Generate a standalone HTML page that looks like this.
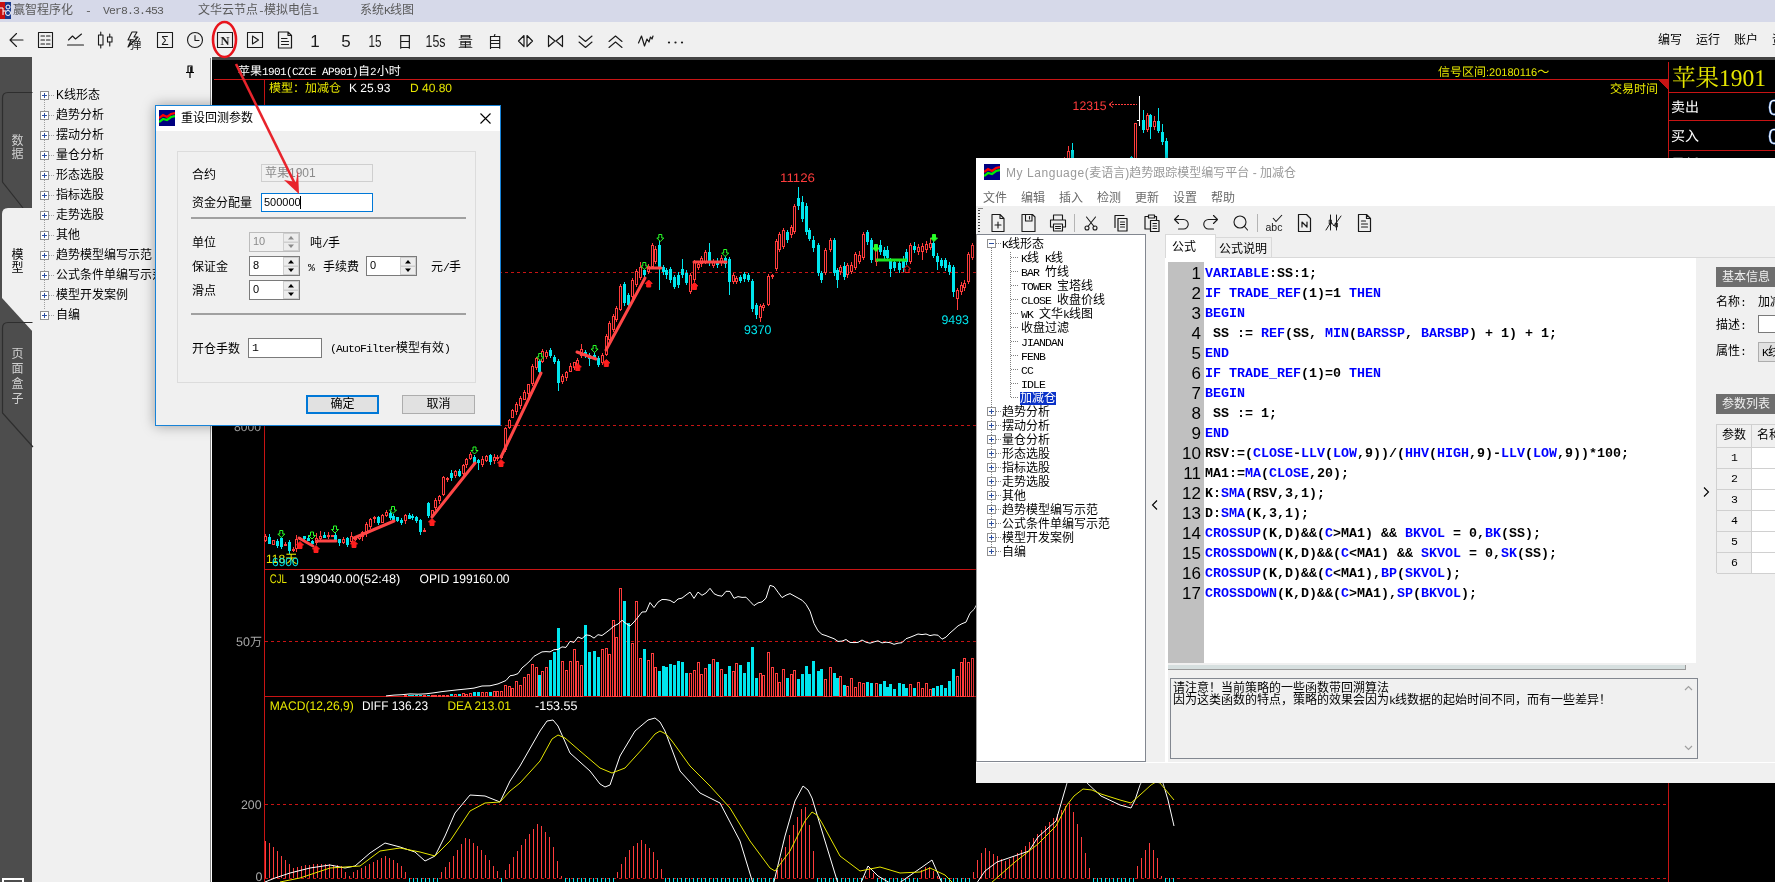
<!DOCTYPE html><html lang="zh"><head><meta charset="utf-8"><title>赢智程序化</title><style>
*{box-sizing:border-box;margin:0;padding:0}
html,body{width:1775px;height:882px;overflow:hidden;background:#f0f0f0}
body{position:relative;font-family:"Liberation Sans","Noto Sans CJK SC",sans-serif;font-size:12px;color:#000;line-height:1}
#root{position:absolute;left:0;top:0;width:1775px;height:882px;will-change:transform}
.abs{position:absolute}
.l{font-family:"Liberation Mono","Noto Sans CJK SC",monospace;font-size:11.5px;letter-spacing:-0.9px}
.ss{font-family:"Liberation Sans","Noto Sans CJK SC",sans-serif;font-size:12px;white-space:nowrap}
/* title bar */
#title{left:0;top:0;width:1775px;height:22px;background:#d6d9e9;color:#5a5a5a}
#title .t{position:absolute;top:4px;font-size:12px;white-space:pre}
#tb{left:0;top:22px;width:1775px;height:35px;background:#f0f0f0}
#tb svg{position:absolute;left:0;top:0}
#tb .r{position:absolute;top:12px;font-size:12px;white-space:nowrap}
#darkline{left:0;top:57px;width:1775px;height:3px;background:#444}
/* left */
#side{left:0;top:57px;width:32px;height:825px;background:#4d4d4d}
#treep{left:32px;top:57px;width:179px;height:825px;background:#f0f0f0}
.ti{position:absolute;left:56px;font-size:12px;white-space:nowrap}
/* chart */
#chart{left:0;top:0}
/* dialog */
#dlg{left:155px;top:105px;width:346px;height:321px;background:#f0f0f0;border:1px solid #1883d7;box-shadow:0 0 12px rgba(0,0,0,.35)}
#dlg .tt{position:absolute;left:0;top:0;width:344px;height:25px;background:#fff}
#dlg .lb{position:absolute;font-size:12px;white-space:nowrap}
#dlg .inp{position:absolute;background:#fff;border:1px solid #7a7a7a;font-size:11px;white-space:nowrap}
/* ML window */
#ml{left:976px;top:158px;width:800px;height:625px;background:#f0f0f0;box-shadow:0 0 10px rgba(0,0,0,.4)}
#ml .mt{position:absolute;left:0;top:0;width:800px;height:48px;background:#fff}
.mtr{position:absolute;white-space:nowrap;font-size:12px;line-height:14px}
.code{position:absolute;left:229px;white-space:pre;font-family:"Liberation Mono",monospace;font-weight:bold;font-size:13.33px;line-height:20px;color:#000}
.code b{color:#0000ff;font-weight:bold}
.ln{position:absolute;left:192px;width:33px;text-align:right;font-family:"Liberation Sans",sans-serif;font-size:17px;line-height:20px;color:#000}
</style></head><body><div id="root"><div class="abs" id="title"><svg class="abs" style="left:0;top:2px" width="11" height="17" viewBox="0 0 11 17"><rect width="11" height="17" fill="#c81010"/><rect x="5" y="0" width="6" height="17" fill="#1a3a8c"/><path d="M0 6h3v7M3 9h3" stroke="#fff" fill="none"/><circle cx="8" cy="5" r="2" fill="none" stroke="#fff"/><circle cx="8" cy="11" r="2.5" fill="none" stroke="#fff"/></svg><div class="t" style="left:13px">赢智程序化<span class="l">  -  Ver8.3.453</span></div><div class="t" style="left:198px">文华云节点<span class="l">-</span>模拟电信<span class="l">1</span></div><div class="t" style="left:360px">系统<span class="l">K</span>线图</div></div><div class="abs" id="tb"><svg width="720" height="35" viewBox="0 0 720 35"><g transform="translate(16.5,18)" stroke="#1a1a1a" stroke-width="1.1" fill="none" stroke-linecap="round" stroke-linejoin="round"><path d="M6.5 0H-6M0 -6.5L-6.5 0L0 6.5"/></g><g transform="translate(45.5,18)" stroke="#1a1a1a" stroke-width="1.1" fill="none" stroke-linecap="round" stroke-linejoin="round"><rect x="-7" y="-7.5" width="14" height="15"/><path d="M-4.5 -4H-1M1 -4H4.5M-4.5 0H-1M1 0H4.5M-4.5 4H-1M1 4H4.5"/></g><g transform="translate(75.5,18)" stroke="#1a1a1a" stroke-width="1.1" fill="none" stroke-linecap="round" stroke-linejoin="round"><path d="M-7 0L-3 -4L0 -1L6 -6M-8 5H8"/></g><g transform="translate(105.5,18)" stroke="#1a1a1a" stroke-width="1.1" fill="none" stroke-linecap="round" stroke-linejoin="round"><rect x="-7" y="-5" width="4.5" height="10"/><path d="M-4.75 -8V-5M-4.75 5V8"/><rect x="2" y="-3" width="4.5" height="5"/><path d="M4.25 -6V-3M4.25 2V6"/></g><g transform="translate(135,18)" stroke="#1a1a1a" stroke-width="1.1" fill="none" stroke-linecap="round" stroke-linejoin="round"><path d="M-3 -8H2L-1 -3H3L-7 7L-4 0H-7Z" stroke-width="1.1"/></g><g transform="translate(165,18)" stroke="#1a1a1a" stroke-width="1.1" fill="none" stroke-linecap="round" stroke-linejoin="round"><rect x="-7.5" y="-7.5" width="15" height="15"/></g><g transform="translate(195,18)" stroke="#1a1a1a" stroke-width="1.1" fill="none" stroke-linecap="round" stroke-linejoin="round"><circle r="7.5"/><path d="M0 -4.5V0.5H4"/></g><g transform="translate(225,18)" stroke="#1a1a1a" stroke-width="1.1" fill="none" stroke-linecap="round" stroke-linejoin="round"><rect x="-7.5" y="-7.5" width="15" height="15"/></g><g transform="translate(255,18)" stroke="#1a1a1a" stroke-width="1.1" fill="none" stroke-linecap="round" stroke-linejoin="round"><rect x="-7.5" y="-7.5" width="15" height="15"/><path d="M-2.5 -4L3.5 0L-2.5 4Z"/></g><g transform="translate(285,18)" stroke="#1a1a1a" stroke-width="1.1" fill="none" stroke-linecap="round" stroke-linejoin="round"><path d="M-6.5 -8H3L6.5 -4.5V8H-6.5ZM3 -8V-4.5H6.5M-3.5 -1.5H2M-3.5 1.5H3.5M-3.5 4.5H3.5" stroke-width="1.2"/></g><g transform="translate(525.5,19)" stroke="#1a1a1a" stroke-width="1.1" fill="none" stroke-linecap="round" stroke-linejoin="round"><path d="M-1.5 -5.5L-7 0L-1.5 5.5ZM1.5 -5.5L7 0L1.5 5.5Z" stroke-width="1.2"/></g><g transform="translate(555.5,19)" stroke="#1a1a1a" stroke-width="1.1" fill="none" stroke-linecap="round" stroke-linejoin="round"><path d="M-7 -5.5L-0.5 0L-7 5.5ZM7 -5.5L0.5 0L7 5.5Z" stroke-width="1.2"/></g><g transform="translate(585.5,19)" stroke="#1a1a1a" stroke-width="1.1" fill="none" stroke-linecap="round" stroke-linejoin="round"><path d="M-6.5 -5L0 0.5L6.5 -5M-6.5 1L0 6.5L6.5 1"/></g><g transform="translate(615.5,19)" stroke="#1a1a1a" stroke-width="1.1" fill="none" stroke-linecap="round" stroke-linejoin="round"><path d="M-6.5 0.5L0 -5L6.5 0.5M-6.5 6.5L0 1L6.5 6.5"/></g><g transform="translate(645.5,19)" stroke="#1a1a1a" stroke-width="1.1" fill="none" stroke-linecap="round" stroke-linejoin="round"><path d="M-7 2L-4 -5L-1 5L1.5 -2L3.5 1L5 -4L6.5 -2L7.5 -5" stroke-width="1.2"/></g><text x="135.5" y="27" font-size="12" font-family="Liberation Sans, Noto Sans CJK SC, sans-serif" fill="#1a1a1a" text-anchor="middle" >弹</text><text x="165" y="22.5" font-size="12" font-family="Liberation Sans, Noto Sans CJK SC, sans-serif" fill="#1a1a1a" text-anchor="middle" >Σ</text><text x="225" y="22.5" font-size="12.5" font-weight="bold" font-family="Liberation Serif, serif" fill="#1a1a1a" text-anchor="middle">N</text><text x="315" y="24.5" font-size="17" font-family="Liberation Sans, Noto Sans CJK SC, sans-serif" fill="#1a1a1a" text-anchor="middle" >1</text><text x="346" y="24.5" font-size="17" font-family="Liberation Sans, Noto Sans CJK SC, sans-serif" fill="#1a1a1a" text-anchor="middle" >5</text><text x="375" y="24.5" font-size="17" font-family="Liberation Sans, Noto Sans CJK SC, sans-serif" fill="#1a1a1a" text-anchor="middle" textLength="13" lengthAdjust="spacingAndGlyphs">15</text><text x="405" y="24.5" font-size="15" font-family="Liberation Sans, Noto Sans CJK SC, sans-serif" fill="#1a1a1a" text-anchor="middle" >日</text><text x="435.5" y="24.5" font-size="17" font-family="Liberation Sans, Noto Sans CJK SC, sans-serif" fill="#1a1a1a" text-anchor="middle" textLength="20" lengthAdjust="spacingAndGlyphs">15s</text><text x="465.5" y="24.5" font-size="15" font-family="Liberation Sans, Noto Sans CJK SC, sans-serif" fill="#1a1a1a" text-anchor="middle" >量</text><text x="495" y="24.5" font-size="15" font-family="Liberation Sans, Noto Sans CJK SC, sans-serif" fill="#1a1a1a" text-anchor="middle" >自</text><circle cx="669" cy="20.5" r="1.1" fill="#1a1a1a"/><circle cx="675.5" cy="20.5" r="1.1" fill="#1a1a1a"/><circle cx="682" cy="20.5" r="1.1" fill="#1a1a1a"/></svg><div class="r" style="left:1658px">编写</div><div class="r" style="left:1696px">运行</div><div class="r" style="left:1734px">账户</div><div class="r" style="left:1772px">资金</div></div><div class="abs" id="darkline"></div><div class="abs" id="side"></div><div class="abs" id="treep"></div><svg class="abs" style="left:0;top:57px" width="34" height="825" viewBox="0 57 34 825"><path d="M32.5 92.5H8Q2.5 92.5 2.5 98V182L23 208" fill="none" stroke="#2e2e2e" stroke-width="1.2"/><path d="M33 208H8Q2 208 2 214V298L33 332Z" fill="#f0f0f0"/><path d="M32.5 322.5H8Q2.5 322.5 2.5 328V413L33 447" fill="none" stroke="#2e2e2e" stroke-width="1.2"/><rect x="3" y="879" width="20" height="10" fill="none" stroke="#fff" stroke-width="2"/><text x="17.5" y="145" fill="#d0d0d0" font-family="Liberation Sans, Noto Sans CJK SC, sans-serif" text-anchor="middle" font-size="12">数</text><text x="17.5" y="158" fill="#d0d0d0" font-family="Liberation Sans, Noto Sans CJK SC, sans-serif" text-anchor="middle" font-size="12">据</text><text x="17.5" y="259" fill="#000" font-family="Liberation Sans, Noto Sans CJK SC, sans-serif" text-anchor="middle" font-size="12">模</text><text x="17.5" y="272" fill="#000" font-family="Liberation Sans, Noto Sans CJK SC, sans-serif" text-anchor="middle" font-size="12">型</text><text x="17.5" y="358" fill="#d0d0d0" font-family="Liberation Sans, Noto Sans CJK SC, sans-serif" text-anchor="middle" font-size="12">页</text><text x="17.5" y="373" fill="#d0d0d0" font-family="Liberation Sans, Noto Sans CJK SC, sans-serif" text-anchor="middle" font-size="12">面</text><text x="17.5" y="388" fill="#d0d0d0" font-family="Liberation Sans, Noto Sans CJK SC, sans-serif" text-anchor="middle" font-size="12">盒</text><text x="17.5" y="403" fill="#d0d0d0" font-family="Liberation Sans, Noto Sans CJK SC, sans-serif" text-anchor="middle" font-size="12">子</text></svg><svg class="abs" style="left:32px;top:57px" width="178" height="300" viewBox="32 57 178 300" shape-rendering="crispEdges"><path d="M44.5 100V310" stroke="#a0a0a0" stroke-dasharray="1 1"/><path d="M49 95.5H54" stroke="#a0a0a0" stroke-dasharray="1 1"/><rect x="40.5" y="91.5" width="8" height="8" fill="#fff" stroke="#919191"/><path d="M42 95.5H47M44.5 93V98" stroke="#2c4ea0"/><path d="M49 115.5H54" stroke="#a0a0a0" stroke-dasharray="1 1"/><rect x="40.5" y="111.5" width="8" height="8" fill="#fff" stroke="#919191"/><path d="M42 115.5H47M44.5 113V118" stroke="#2c4ea0"/><path d="M49 135.5H54" stroke="#a0a0a0" stroke-dasharray="1 1"/><rect x="40.5" y="131.5" width="8" height="8" fill="#fff" stroke="#919191"/><path d="M42 135.5H47M44.5 133V138" stroke="#2c4ea0"/><path d="M49 155.5H54" stroke="#a0a0a0" stroke-dasharray="1 1"/><rect x="40.5" y="151.5" width="8" height="8" fill="#fff" stroke="#919191"/><path d="M42 155.5H47M44.5 153V158" stroke="#2c4ea0"/><path d="M49 175.5H54" stroke="#a0a0a0" stroke-dasharray="1 1"/><rect x="40.5" y="171.5" width="8" height="8" fill="#fff" stroke="#919191"/><path d="M42 175.5H47M44.5 173V178" stroke="#2c4ea0"/><path d="M49 195.5H54" stroke="#a0a0a0" stroke-dasharray="1 1"/><rect x="40.5" y="191.5" width="8" height="8" fill="#fff" stroke="#919191"/><path d="M42 195.5H47M44.5 193V198" stroke="#2c4ea0"/><path d="M49 215.5H54" stroke="#a0a0a0" stroke-dasharray="1 1"/><rect x="40.5" y="211.5" width="8" height="8" fill="#fff" stroke="#919191"/><path d="M42 215.5H47M44.5 213V218" stroke="#2c4ea0"/><path d="M49 235.5H54" stroke="#a0a0a0" stroke-dasharray="1 1"/><rect x="40.5" y="231.5" width="8" height="8" fill="#fff" stroke="#919191"/><path d="M42 235.5H47M44.5 233V238" stroke="#2c4ea0"/><path d="M49 255.5H54" stroke="#a0a0a0" stroke-dasharray="1 1"/><rect x="40.5" y="251.5" width="8" height="8" fill="#fff" stroke="#919191"/><path d="M42 255.5H47M44.5 253V258" stroke="#2c4ea0"/><path d="M49 275.5H54" stroke="#a0a0a0" stroke-dasharray="1 1"/><rect x="40.5" y="271.5" width="8" height="8" fill="#fff" stroke="#919191"/><path d="M42 275.5H47M44.5 273V278" stroke="#2c4ea0"/><path d="M49 295.5H54" stroke="#a0a0a0" stroke-dasharray="1 1"/><rect x="40.5" y="291.5" width="8" height="8" fill="#fff" stroke="#919191"/><path d="M42 295.5H47M44.5 293V298" stroke="#2c4ea0"/><path d="M49 315.5H54" stroke="#a0a0a0" stroke-dasharray="1 1"/><rect x="40.5" y="311.5" width="8" height="8" fill="#fff" stroke="#919191"/><path d="M42 315.5H47M44.5 313V318" stroke="#2c4ea0"/><g shape-rendering="geometricPrecision"><path d="M187.5 66H192.5M188 66.5V72.5H192V66.5M186 72.5H194M190 72.5V78" stroke="#000" stroke-width="1.2" fill="none"/><path d="M191 67V72" stroke="#000" stroke-width="1.6"/></g></svg><div class="ti abs" style="top:89px">K线形态</div><div class="ti abs" style="top:109px">趋势分析</div><div class="ti abs" style="top:129px">摆动分析</div><div class="ti abs" style="top:149px">量仓分析</div><div class="ti abs" style="top:169px">形态选股</div><div class="ti abs" style="top:189px">指标选股</div><div class="ti abs" style="top:209px">走势选股</div><div class="ti abs" style="top:229px">其他</div><div class="ti abs" style="top:249px">趋势模型编写示范</div><div class="ti abs" style="top:269px">公式条件单编写示范</div><div class="ti abs" style="top:289px">模型开发案例</div><div class="ti abs" style="top:309px">自编</div><svg class="abs" id="chart" width="1775" height="882" viewBox="0 0 1775 882" shape-rendering="crispEdges" text-rendering="geometricPrecision"><rect x="212" y="60" width="1563" height="822" fill="#000"/><rect x="210" y="58" width="1" height="824" fill="#8c8c8c"/><rect x="211" y="57" width="1" height="825" fill="#fff"/><path d="M214 79.5H1668M264.5 79V882M264 569.5H1668M264 696.5H1668M1668.5 62V882M1668 92.5H1775M1668 120.5H1775M1668 150.5H1775" stroke="#c81414" fill="none"/><path d="M1658 80H1668V90Z" fill="#c81414"/><path d="M265 272.5H1668M265 425.5H1668M265 641.5H1668M265 804.5H1668M265 878.5H1668" stroke="#c81414" stroke-dasharray="3 3" fill="none"/><g shape-rendering="crispEdges"><path d="M265.5 534V536M265.5 541V542" stroke="#ff3c3c"/><rect x="264.5" y="536.5" width="2" height="4" fill="#000" stroke="#ff3c3c"/><path d="M269.5 534V544" stroke="#00e6ee"/><rect x="268" y="537" width="3" height="7" fill="#00e6ee"/><path d="M273.5 540V540M273.5 545V545" stroke="#ff3c3c"/><rect x="272.5" y="540.5" width="2" height="4" fill="#000" stroke="#ff3c3c"/><path d="M277.5 539V548" stroke="#00e6ee"/><rect x="276" y="541" width="3" height="5" fill="#00e6ee"/><path d="M281.5 536V549" stroke="#00e6ee"/><rect x="280" y="538" width="3" height="9" fill="#00e6ee"/><path d="M285.5 542V544M285.5 546V546" stroke="#ff3c3c"/><rect x="284.5" y="544.5" width="2" height="1" fill="#000" stroke="#ff3c3c"/><path d="M289.5 540V554" stroke="#00e6ee"/><rect x="288" y="542" width="3" height="9" fill="#00e6ee"/><path d="M293.5 547V549M293.5 550V552" stroke="#ff3c3c"/><rect x="292.5" y="549.5" width="2" height="1" fill="#000" stroke="#ff3c3c"/><path d="M296.5 535V539M296.5 549V552" stroke="#ff3c3c"/><rect x="295.5" y="539.5" width="2" height="9" fill="#000" stroke="#ff3c3c"/><path d="M300.5 537V538M300.5 540V540" stroke="#ff3c3c"/><rect x="299.5" y="538.5" width="2" height="1" fill="#000" stroke="#ff3c3c"/><path d="M304.5 536V542" stroke="#00e6ee"/><rect x="303" y="536" width="3" height="3" fill="#00e6ee"/><path d="M308.5 535V541" stroke="#00e6ee"/><rect x="307" y="538" width="3" height="3" fill="#00e6ee"/><path d="M312.5 540V544" stroke="#00e6ee"/><rect x="311" y="541" width="3" height="3" fill="#00e6ee"/><path d="M316.5 533V538M316.5 543V545" stroke="#ff3c3c"/><rect x="315.5" y="538.5" width="2" height="4" fill="#000" stroke="#ff3c3c"/><path d="M320.5 531V536M320.5 539V541" stroke="#ff3c3c"/><rect x="319.5" y="536.5" width="2" height="2" fill="#000" stroke="#ff3c3c"/><path d="M324.5 532V538" stroke="#00e6ee"/><rect x="323" y="535" width="3" height="3" fill="#00e6ee"/><path d="M328.5 532V535M328.5 537V539" stroke="#ff3c3c"/><rect x="327.5" y="535.5" width="2" height="1" fill="#000" stroke="#ff3c3c"/><path d="M332.5 535V535M332.5 536V537" stroke="#ff3c3c"/><rect x="331.5" y="535.5" width="2" height="1" fill="#000" stroke="#ff3c3c"/><path d="M335.5 532V541" stroke="#00e6ee"/><rect x="334" y="535" width="3" height="5" fill="#00e6ee"/><path d="M339.5 539V546" stroke="#00e6ee"/><rect x="338" y="539" width="3" height="4" fill="#00e6ee"/><path d="M343.5 537V539M343.5 543V544" stroke="#ff3c3c"/><rect x="342.5" y="539.5" width="2" height="3" fill="#000" stroke="#ff3c3c"/><path d="M347.5 537V547" stroke="#00e6ee"/><rect x="346" y="538" width="3" height="7" fill="#00e6ee"/><path d="M351.5 532V536M351.5 542V544" stroke="#ff3c3c"/><rect x="350.5" y="536.5" width="2" height="5" fill="#000" stroke="#ff3c3c"/><path d="M355.5 537V537M355.5 540V541" stroke="#ff3c3c"/><rect x="354.5" y="537.5" width="2" height="2" fill="#000" stroke="#ff3c3c"/><path d="M359.5 535V535M359.5 539V540" stroke="#ff3c3c"/><rect x="358.5" y="535.5" width="2" height="3" fill="#000" stroke="#ff3c3c"/><path d="M362.5 531V532M362.5 537V541" stroke="#ff3c3c"/><rect x="361.5" y="532.5" width="2" height="4" fill="#000" stroke="#ff3c3c"/><path d="M366.5 522V524M366.5 534V537" stroke="#ff3c3c"/><rect x="365.5" y="524.5" width="2" height="9" fill="#000" stroke="#ff3c3c"/><path d="M370.5 518V519M370.5 527V529" stroke="#ff3c3c"/><rect x="369.5" y="519.5" width="2" height="7" fill="#000" stroke="#ff3c3c"/><path d="M374.5 516V517M374.5 519V523" stroke="#ff3c3c"/><rect x="373.5" y="517.5" width="2" height="1" fill="#000" stroke="#ff3c3c"/><path d="M378.5 516V525" stroke="#00e6ee"/><rect x="377" y="517" width="3" height="6" fill="#00e6ee"/><path d="M382.5 514V515M382.5 523V523" stroke="#ff3c3c"/><rect x="381.5" y="515.5" width="2" height="7" fill="#000" stroke="#ff3c3c"/><path d="M386.5 510V512M386.5 516V517" stroke="#ff3c3c"/><rect x="385.5" y="512.5" width="2" height="3" fill="#000" stroke="#ff3c3c"/><path d="M390.5 511V520" stroke="#00e6ee"/><rect x="389" y="513" width="3" height="5" fill="#00e6ee"/><path d="M393.5 514V522" stroke="#00e6ee"/><rect x="392" y="516" width="3" height="4" fill="#00e6ee"/><path d="M397.5 517V522" stroke="#00e6ee"/><rect x="396" y="517" width="3" height="4" fill="#00e6ee"/><path d="M401.5 518V525" stroke="#00e6ee"/><rect x="400" y="520" width="3" height="3" fill="#00e6ee"/><path d="M405.5 514V515M405.5 521V524" stroke="#ff3c3c"/><rect x="404.5" y="515.5" width="2" height="5" fill="#000" stroke="#ff3c3c"/><path d="M409.5 513V519" stroke="#00e6ee"/><rect x="408" y="515" width="3" height="4" fill="#00e6ee"/><path d="M412.5 514V520" stroke="#00e6ee"/><rect x="411" y="516" width="3" height="2" fill="#00e6ee"/><path d="M416.5 516V523" stroke="#00e6ee"/><rect x="415" y="517" width="3" height="4" fill="#00e6ee"/><path d="M420.5 519V535" stroke="#00e6ee"/><rect x="419" y="520" width="3" height="12" fill="#00e6ee"/><path d="M424.5 528V530M424.5 532V532" stroke="#ff3c3c"/><rect x="423.5" y="530.5" width="2" height="1" fill="#000" stroke="#ff3c3c"/><path d="M428.5 502V518" stroke="#00e6ee"/><rect x="427" y="503" width="3" height="13" fill="#00e6ee"/><path d="M432.5 510V510M432.5 516V516" stroke="#ff3c3c"/><rect x="431.5" y="510.5" width="2" height="5" fill="#000" stroke="#ff3c3c"/><path d="M435.5 498V500M435.5 508V510" stroke="#ff3c3c"/><rect x="434.5" y="500.5" width="2" height="7" fill="#000" stroke="#ff3c3c"/><path d="M439.5 495V496M439.5 501V504" stroke="#ff3c3c"/><rect x="438.5" y="496.5" width="2" height="4" fill="#000" stroke="#ff3c3c"/><path d="M443.5 476V477M443.5 495V496" stroke="#ff3c3c"/><rect x="442.5" y="477.5" width="2" height="17" fill="#000" stroke="#ff3c3c"/><path d="M447.5 477V478M447.5 480V482" stroke="#ff3c3c"/><rect x="446.5" y="478.5" width="2" height="1" fill="#000" stroke="#ff3c3c"/><path d="M451.5 470V481" stroke="#00e6ee"/><rect x="450" y="473" width="3" height="5" fill="#00e6ee"/><path d="M455.5 470V471M455.5 476V478" stroke="#ff3c3c"/><rect x="454.5" y="471.5" width="2" height="4" fill="#000" stroke="#ff3c3c"/><path d="M459.5 469V477" stroke="#00e6ee"/><rect x="458" y="471" width="3" height="5" fill="#00e6ee"/><path d="M463.5 464V465M463.5 474V476" stroke="#ff3c3c"/><rect x="462.5" y="465.5" width="2" height="8" fill="#000" stroke="#ff3c3c"/><path d="M466.5 458V459M466.5 465V468" stroke="#ff3c3c"/><rect x="465.5" y="459.5" width="2" height="5" fill="#000" stroke="#ff3c3c"/><path d="M470.5 452V454M470.5 459V460" stroke="#ff3c3c"/><rect x="469.5" y="454.5" width="2" height="4" fill="#000" stroke="#ff3c3c"/><path d="M474.5 455V464" stroke="#00e6ee"/><rect x="473" y="457" width="3" height="6" fill="#00e6ee"/><path d="M478.5 459V470" stroke="#00e6ee"/><rect x="477" y="460" width="3" height="3" fill="#00e6ee"/><path d="M482.5 456V459M482.5 465V467" stroke="#ff3c3c"/><rect x="481.5" y="459.5" width="2" height="5" fill="#000" stroke="#ff3c3c"/><path d="M486.5 455V456M486.5 461V462" stroke="#ff3c3c"/><rect x="485.5" y="456.5" width="2" height="4" fill="#000" stroke="#ff3c3c"/><path d="M490.5 454V465" stroke="#00e6ee"/><rect x="489" y="455" width="3" height="7" fill="#00e6ee"/><path d="M494.5 454V457M494.5 461V464" stroke="#ff3c3c"/><rect x="493.5" y="457.5" width="2" height="3" fill="#000" stroke="#ff3c3c"/><path d="M497.5 455V457M497.5 459V461" stroke="#ff3c3c"/><rect x="496.5" y="457.5" width="2" height="1" fill="#000" stroke="#ff3c3c"/><path d="M501.5 454V455M501.5 458V459" stroke="#ff3c3c"/><rect x="500.5" y="455.5" width="2" height="2" fill="#000" stroke="#ff3c3c"/><path d="M505.5 427V428M505.5 450V452" stroke="#ff3c3c"/><rect x="504.5" y="428.5" width="2" height="21" fill="#000" stroke="#ff3c3c"/><path d="M509.5 419V420M509.5 428V429" stroke="#ff3c3c"/><rect x="508.5" y="420.5" width="2" height="7" fill="#000" stroke="#ff3c3c"/><path d="M512.5 409V410M512.5 418V418" stroke="#ff3c3c"/><rect x="511.5" y="410.5" width="2" height="7" fill="#000" stroke="#ff3c3c"/><path d="M516.5 402V404M516.5 412V415" stroke="#ff3c3c"/><rect x="515.5" y="404.5" width="2" height="7" fill="#000" stroke="#ff3c3c"/><path d="M520.5 396V398M520.5 406V409" stroke="#ff3c3c"/><rect x="519.5" y="398.5" width="2" height="7" fill="#000" stroke="#ff3c3c"/><path d="M524.5 390V392M524.5 400V400" stroke="#ff3c3c"/><rect x="523.5" y="392.5" width="2" height="7" fill="#000" stroke="#ff3c3c"/><path d="M528.5 384V384M528.5 394V397" stroke="#ff3c3c"/><rect x="527.5" y="384.5" width="2" height="9" fill="#000" stroke="#ff3c3c"/><path d="M532.5 364V366M532.5 384V386" stroke="#ff3c3c"/><rect x="531.5" y="366.5" width="2" height="17" fill="#000" stroke="#ff3c3c"/><path d="M536.5 357V358M536.5 368V370" stroke="#ff3c3c"/><rect x="535.5" y="358.5" width="2" height="9" fill="#000" stroke="#ff3c3c"/><path d="M539.5 359V374" stroke="#00e6ee"/><rect x="538" y="361" width="3" height="11" fill="#00e6ee"/><path d="M542.5 349V351M542.5 362V363" stroke="#ff3c3c"/><rect x="541.5" y="351.5" width="2" height="10" fill="#000" stroke="#ff3c3c"/><path d="M546.5 350V352M546.5 357V359" stroke="#ff3c3c"/><rect x="545.5" y="352.5" width="2" height="4" fill="#000" stroke="#ff3c3c"/><path d="M550.5 348V358" stroke="#00e6ee"/><rect x="549" y="350" width="3" height="6" fill="#00e6ee"/><path d="M554.5 355V364" stroke="#00e6ee"/><rect x="553" y="357" width="3" height="5" fill="#00e6ee"/><path d="M558.5 359V391" stroke="#00e6ee"/><rect x="557" y="361" width="3" height="22" fill="#00e6ee"/><path d="M562.5 374V376M562.5 382V384" stroke="#ff3c3c"/><rect x="561.5" y="376.5" width="2" height="5" fill="#000" stroke="#ff3c3c"/><path d="M566.5 371V372M566.5 378V381" stroke="#ff3c3c"/><rect x="565.5" y="372.5" width="2" height="5" fill="#000" stroke="#ff3c3c"/><path d="M570.5 363V366M570.5 372V372" stroke="#ff3c3c"/><rect x="569.5" y="366.5" width="2" height="5" fill="#000" stroke="#ff3c3c"/><path d="M574.5 362V362M574.5 368V370" stroke="#ff3c3c"/><rect x="573.5" y="362.5" width="2" height="5" fill="#000" stroke="#ff3c3c"/><path d="M577.5 358V360M577.5 366V368" stroke="#ff3c3c"/><rect x="576.5" y="360.5" width="2" height="5" fill="#000" stroke="#ff3c3c"/><path d="M581.5 344V349M581.5 356V358" stroke="#ff3c3c"/><rect x="580.5" y="349.5" width="2" height="6" fill="#000" stroke="#ff3c3c"/><path d="M585.5 350V358" stroke="#00e6ee"/><rect x="584" y="352" width="3" height="4" fill="#00e6ee"/><path d="M589.5 353V366" stroke="#00e6ee"/><rect x="588" y="355" width="3" height="4" fill="#00e6ee"/><path d="M594.5 351V360" stroke="#00e6ee"/><rect x="593" y="355" width="3" height="3" fill="#00e6ee"/><path d="M598.5 356V367" stroke="#00e6ee"/><rect x="597" y="358" width="3" height="7" fill="#00e6ee"/><path d="M602.5 353V355M602.5 363V365" stroke="#ff3c3c"/><rect x="601.5" y="355.5" width="2" height="7" fill="#000" stroke="#ff3c3c"/><path d="M606.5 334V336M606.5 355V356" stroke="#ff3c3c"/><rect x="605.5" y="336.5" width="2" height="18" fill="#000" stroke="#ff3c3c"/><path d="M609.5 321V323M609.5 340V342" stroke="#ff3c3c"/><rect x="608.5" y="323.5" width="2" height="16" fill="#000" stroke="#ff3c3c"/><path d="M613.5 314V316M613.5 330V332" stroke="#ff3c3c"/><rect x="612.5" y="316.5" width="2" height="13" fill="#000" stroke="#ff3c3c"/><path d="M616.5 306V308M616.5 320V322" stroke="#ff3c3c"/><rect x="615.5" y="308.5" width="2" height="11" fill="#000" stroke="#ff3c3c"/><path d="M620.5 284V286M620.5 310V311" stroke="#ff3c3c"/><rect x="619.5" y="286.5" width="2" height="23" fill="#000" stroke="#ff3c3c"/><path d="M624.5 282V306" stroke="#00e6ee"/><rect x="623" y="284" width="3" height="19" fill="#00e6ee"/><path d="M628.5 293V308" stroke="#00e6ee"/><rect x="627" y="295" width="3" height="10" fill="#00e6ee"/><path d="M632.5 278V280M632.5 297V299" stroke="#ff3c3c"/><rect x="631.5" y="280.5" width="2" height="16" fill="#000" stroke="#ff3c3c"/><path d="M636.5 269V271M636.5 285V287" stroke="#ff3c3c"/><rect x="635.5" y="271.5" width="2" height="13" fill="#000" stroke="#ff3c3c"/><path d="M640.5 262V267M640.5 278V280" stroke="#ff3c3c"/><rect x="639.5" y="267.5" width="2" height="10" fill="#000" stroke="#ff3c3c"/><path d="M644.5 264V277" stroke="#00e6ee"/><rect x="643" y="270" width="3" height="5" fill="#00e6ee"/><path d="M648.5 264V266M648.5 272V274" stroke="#ff3c3c"/><rect x="647.5" y="266.5" width="2" height="5" fill="#000" stroke="#ff3c3c"/><path d="M652.5 243V245M652.5 267V268" stroke="#ff3c3c"/><rect x="651.5" y="245.5" width="2" height="21" fill="#000" stroke="#ff3c3c"/><path d="M655.5 246V249M655.5 262V264" stroke="#ff3c3c"/><rect x="654.5" y="249.5" width="2" height="12" fill="#000" stroke="#ff3c3c"/><path d="M659.5 241V290" stroke="#00e6ee"/><rect x="658" y="245" width="3" height="22" fill="#00e6ee"/><path d="M663.5 265V275" stroke="#00e6ee"/><rect x="662" y="267" width="3" height="5" fill="#00e6ee"/><path d="M666.5 268V279" stroke="#00e6ee"/><rect x="665" y="270" width="3" height="5" fill="#00e6ee"/><path d="M670.5 267V283" stroke="#00e6ee"/><rect x="669" y="269" width="3" height="11" fill="#00e6ee"/><path d="M674.5 275V289" stroke="#00e6ee"/><rect x="673" y="277" width="3" height="10" fill="#00e6ee"/><path d="M678.5 272V288" stroke="#00e6ee"/><rect x="677" y="275" width="3" height="10" fill="#00e6ee"/><path d="M682.5 259V278" stroke="#00e6ee"/><rect x="681" y="269" width="3" height="6" fill="#00e6ee"/><path d="M686.5 270V285" stroke="#00e6ee"/><rect x="685" y="273" width="3" height="10" fill="#00e6ee"/><path d="M690.5 273V275M690.5 292V294" stroke="#ff3c3c"/><rect x="689.5" y="275.5" width="2" height="16" fill="#000" stroke="#ff3c3c"/><path d="M694.5 260V262M694.5 280V282" stroke="#ff3c3c"/><rect x="693.5" y="262.5" width="2" height="17" fill="#000" stroke="#ff3c3c"/><path d="M698.5 261V264M698.5 268V270" stroke="#ff3c3c"/><rect x="697.5" y="264.5" width="2" height="3" fill="#000" stroke="#ff3c3c"/><path d="M701.5 256V258M701.5 264V267" stroke="#ff3c3c"/><rect x="700.5" y="258.5" width="2" height="5" fill="#000" stroke="#ff3c3c"/><path d="M705.5 250V252M705.5 262V264" stroke="#ff3c3c"/><rect x="704.5" y="252.5" width="2" height="9" fill="#000" stroke="#ff3c3c"/><path d="M709.5 243V266" stroke="#00e6ee"/><rect x="708" y="252" width="3" height="10" fill="#00e6ee"/><path d="M713.5 259V262M713.5 266V268" stroke="#ff3c3c"/><rect x="712.5" y="262.5" width="2" height="3" fill="#000" stroke="#ff3c3c"/><path d="M717.5 258V268" stroke="#00e6ee"/><rect x="716" y="261" width="3" height="4" fill="#00e6ee"/><path d="M721.5 255V258M721.5 263V266" stroke="#ff3c3c"/><rect x="720.5" y="258.5" width="2" height="4" fill="#000" stroke="#ff3c3c"/><path d="M725.5 255V268" stroke="#00e6ee"/><rect x="724" y="258" width="3" height="6" fill="#00e6ee"/><path d="M729.5 257V295" stroke="#00e6ee"/><rect x="728" y="259" width="3" height="23" fill="#00e6ee"/><path d="M733.5 273V275M733.5 282V284" stroke="#ff3c3c"/><rect x="732.5" y="275.5" width="2" height="6" fill="#000" stroke="#ff3c3c"/><path d="M736.5 276V278M736.5 282V284" stroke="#ff3c3c"/><rect x="735.5" y="278.5" width="2" height="3" fill="#000" stroke="#ff3c3c"/><path d="M740.5 275V283" stroke="#00e6ee"/><rect x="739" y="277" width="3" height="4" fill="#00e6ee"/><path d="M744.5 272V282" stroke="#00e6ee"/><rect x="743" y="274" width="3" height="5" fill="#00e6ee"/><path d="M748.5 273V282" stroke="#00e6ee"/><rect x="747" y="275" width="3" height="5" fill="#00e6ee"/><path d="M752.5 279V312" stroke="#00e6ee"/><rect x="751" y="281" width="3" height="28" fill="#00e6ee"/><path d="M756.5 303V319" stroke="#00e6ee"/><rect x="755" y="305" width="3" height="10" fill="#00e6ee"/><path d="M760.5 304V306M760.5 318V322" stroke="#ff3c3c"/><rect x="759.5" y="306.5" width="2" height="11" fill="#000" stroke="#ff3c3c"/><path d="M763.5 303V305M763.5 308V311" stroke="#ff3c3c"/><rect x="762.5" y="305.5" width="2" height="2" fill="#000" stroke="#ff3c3c"/><path d="M768.5 274V276M768.5 305V306" stroke="#ff3c3c"/><rect x="767.5" y="276.5" width="2" height="28" fill="#000" stroke="#ff3c3c"/><path d="M772.5 274V275M772.5 277V279" stroke="#ff3c3c"/><rect x="771.5" y="275.5" width="2" height="1" fill="#000" stroke="#ff3c3c"/><path d="M776.5 239V241M776.5 269V271" stroke="#ff3c3c"/><rect x="775.5" y="241.5" width="2" height="27" fill="#000" stroke="#ff3c3c"/><path d="M779.5 232V234M779.5 250V252" stroke="#ff3c3c"/><rect x="778.5" y="234.5" width="2" height="15" fill="#000" stroke="#ff3c3c"/><path d="M783.5 228V230M783.5 247V249" stroke="#ff3c3c"/><rect x="782.5" y="230.5" width="2" height="16" fill="#000" stroke="#ff3c3c"/><path d="M787.5 230V243" stroke="#00e6ee"/><rect x="786" y="232" width="3" height="8" fill="#00e6ee"/><path d="M791.5 225V227M791.5 235V238" stroke="#ff3c3c"/><rect x="790.5" y="227.5" width="2" height="7" fill="#000" stroke="#ff3c3c"/><path d="M794.5 204V206M794.5 232V234" stroke="#ff3c3c"/><rect x="793.5" y="206.5" width="2" height="25" fill="#000" stroke="#ff3c3c"/><path d="M798.5 187V210" stroke="#00e6ee"/><rect x="797" y="198" width="3" height="8" fill="#00e6ee"/><path d="M802.5 196V222" stroke="#00e6ee"/><rect x="801" y="202" width="3" height="17" fill="#00e6ee"/><path d="M806.5 203V235" stroke="#00e6ee"/><rect x="805" y="206" width="3" height="26" fill="#00e6ee"/><path d="M809.5 228V241" stroke="#00e6ee"/><rect x="808" y="230" width="3" height="9" fill="#00e6ee"/><path d="M813.5 236V252" stroke="#00e6ee"/><rect x="812" y="240" width="3" height="8" fill="#00e6ee"/><path d="M818.5 243V276" stroke="#00e6ee"/><rect x="817" y="245" width="3" height="28" fill="#00e6ee"/><path d="M821.5 271V283" stroke="#00e6ee"/><rect x="820" y="273" width="3" height="7" fill="#00e6ee"/><path d="M825.5 248V250M825.5 273V275" stroke="#ff3c3c"/><rect x="824.5" y="250.5" width="2" height="22" fill="#000" stroke="#ff3c3c"/><path d="M830.5 238V240M830.5 250V252" stroke="#ff3c3c"/><rect x="829.5" y="240.5" width="2" height="9" fill="#000" stroke="#ff3c3c"/><path d="M834.5 238V276" stroke="#00e6ee"/><rect x="833" y="240" width="3" height="33" fill="#00e6ee"/><path d="M837.5 268V288" stroke="#00e6ee"/><rect x="836" y="270" width="3" height="10" fill="#00e6ee"/><path d="M840.5 265V267M840.5 272V275" stroke="#ff3c3c"/><rect x="839.5" y="267.5" width="2" height="4" fill="#000" stroke="#ff3c3c"/><path d="M844.5 262V280" stroke="#00e6ee"/><rect x="843" y="266" width="3" height="11" fill="#00e6ee"/><path d="M847.5 263V265M847.5 275V278" stroke="#ff3c3c"/><rect x="846.5" y="265.5" width="2" height="9" fill="#000" stroke="#ff3c3c"/><path d="M851.5 262V265M851.5 272V274" stroke="#ff3c3c"/><rect x="850.5" y="265.5" width="2" height="6" fill="#000" stroke="#ff3c3c"/><path d="M855.5 252V254M855.5 268V270" stroke="#ff3c3c"/><rect x="854.5" y="254.5" width="2" height="13" fill="#000" stroke="#ff3c3c"/><path d="M859.5 251V255M859.5 262V264" stroke="#ff3c3c"/><rect x="858.5" y="255.5" width="2" height="6" fill="#000" stroke="#ff3c3c"/><path d="M863.5 232V234M863.5 258V260" stroke="#ff3c3c"/><rect x="862.5" y="234.5" width="2" height="23" fill="#000" stroke="#ff3c3c"/><path d="M867.5 230V245" stroke="#00e6ee"/><rect x="866" y="232" width="3" height="10" fill="#00e6ee"/><path d="M871.5 238V263" stroke="#00e6ee"/><rect x="870" y="240" width="3" height="20" fill="#00e6ee"/><path d="M876.5 245V247M876.5 262V266" stroke="#ff3c3c"/><rect x="875.5" y="247.5" width="2" height="14" fill="#000" stroke="#ff3c3c"/><path d="M880.5 240V255" stroke="#00e6ee"/><rect x="879" y="245" width="3" height="7" fill="#00e6ee"/><path d="M884.5 247V259" stroke="#00e6ee"/><rect x="883" y="250" width="3" height="6" fill="#00e6ee"/><path d="M887.5 246V261" stroke="#00e6ee"/><rect x="886" y="250" width="3" height="8" fill="#00e6ee"/><path d="M890.5 258V277" stroke="#00e6ee"/><rect x="889" y="260" width="3" height="9" fill="#00e6ee"/><path d="M894.5 259V271" stroke="#00e6ee"/><rect x="893" y="262" width="3" height="6" fill="#00e6ee"/><path d="M899.5 260V273" stroke="#00e6ee"/><rect x="898" y="263" width="3" height="7" fill="#00e6ee"/><path d="M903.5 256V272" stroke="#00e6ee"/><rect x="902" y="259" width="3" height="9" fill="#00e6ee"/><path d="M906.5 249V265" stroke="#00e6ee"/><rect x="905" y="252" width="3" height="10" fill="#00e6ee"/><path d="M910.5 243V245M910.5 262V264" stroke="#ff3c3c"/><rect x="909.5" y="245.5" width="2" height="16" fill="#000" stroke="#ff3c3c"/><path d="M914.5 242V253" stroke="#00e6ee"/><rect x="913" y="246" width="3" height="4" fill="#00e6ee"/><path d="M918.5 244V247M918.5 252V255" stroke="#ff3c3c"/><rect x="917.5" y="247.5" width="2" height="4" fill="#000" stroke="#ff3c3c"/><path d="M922.5 243V246M922.5 252V260" stroke="#ff3c3c"/><rect x="921.5" y="246.5" width="2" height="5" fill="#000" stroke="#ff3c3c"/><path d="M926.5 241V244M926.5 250V253" stroke="#ff3c3c"/><rect x="925.5" y="244.5" width="2" height="5" fill="#000" stroke="#ff3c3c"/><path d="M930.5 238V243M930.5 248V250" stroke="#ff3c3c"/><rect x="929.5" y="243.5" width="2" height="4" fill="#000" stroke="#ff3c3c"/><path d="M933.5 241V258" stroke="#00e6ee"/><rect x="932" y="243" width="3" height="13" fill="#00e6ee"/><path d="M937.5 253V270" stroke="#00e6ee"/><rect x="936" y="256" width="3" height="6" fill="#00e6ee"/><path d="M941.5 258V268" stroke="#00e6ee"/><rect x="940" y="260" width="3" height="6" fill="#00e6ee"/><path d="M945.5 258V271" stroke="#00e6ee"/><rect x="944" y="260" width="3" height="8" fill="#00e6ee"/><path d="M949.5 262V275" stroke="#00e6ee"/><rect x="948" y="265" width="3" height="7" fill="#00e6ee"/><path d="M953.5 265V297" stroke="#00e6ee"/><rect x="952" y="267" width="3" height="25" fill="#00e6ee"/><path d="M957.5 288V290M957.5 299V310" stroke="#ff3c3c"/><rect x="956.5" y="290.5" width="2" height="8" fill="#000" stroke="#ff3c3c"/><path d="M961.5 282V285M961.5 292V295" stroke="#ff3c3c"/><rect x="960.5" y="285.5" width="2" height="6" fill="#000" stroke="#ff3c3c"/><path d="M964.5 280V283M964.5 288V291" stroke="#ff3c3c"/><rect x="963.5" y="283.5" width="2" height="4" fill="#000" stroke="#ff3c3c"/><path d="M968.5 252V254M968.5 282V284" stroke="#ff3c3c"/><rect x="967.5" y="254.5" width="2" height="27" fill="#000" stroke="#ff3c3c"/><path d="M972.5 243V245M972.5 258V260" stroke="#ff3c3c"/><rect x="971.5" y="245.5" width="2" height="12" fill="#000" stroke="#ff3c3c"/><path d="M977.5 238V240M977.5 250V252" stroke="#ff3c3c"/><rect x="976.5" y="240.5" width="2" height="9" fill="#000" stroke="#ff3c3c"/><path d="M981.5 233V247" stroke="#00e6ee"/><rect x="980" y="236" width="3" height="8" fill="#00e6ee"/><path d="M985.5 225V225M985.5 240V240" stroke="#ff3c3c"/><rect x="984.5" y="225.5" width="2" height="14" fill="#000" stroke="#ff3c3c"/><path d="M989.5 213V215M989.5 228V231" stroke="#ff3c3c"/><rect x="988.5" y="215.5" width="2" height="12" fill="#000" stroke="#ff3c3c"/><path d="M993.5 205V205M993.5 218V218" stroke="#ff3c3c"/><rect x="992.5" y="205.5" width="2" height="12" fill="#000" stroke="#ff3c3c"/><path d="M997.5 198V215" stroke="#00e6ee"/><rect x="996" y="200" width="3" height="12" fill="#00e6ee"/><path d="M1001.5 194V196M1001.5 206V209" stroke="#ff3c3c"/><rect x="1000.5" y="196.5" width="2" height="9" fill="#000" stroke="#ff3c3c"/><path d="M1005.5 188V190M1005.5 200V200" stroke="#ff3c3c"/><rect x="1004.5" y="190.5" width="2" height="9" fill="#000" stroke="#ff3c3c"/><path d="M1009.5 183V198" stroke="#00e6ee"/><rect x="1008" y="186" width="3" height="10" fill="#00e6ee"/><path d="M1013.5 181V182M1013.5 192V192" stroke="#ff3c3c"/><rect x="1012.5" y="182.5" width="2" height="9" fill="#000" stroke="#ff3c3c"/><path d="M1017.5 175V178M1017.5 188V188" stroke="#ff3c3c"/><rect x="1016.5" y="178.5" width="2" height="9" fill="#000" stroke="#ff3c3c"/><path d="M1021.5 175V188" stroke="#00e6ee"/><rect x="1020" y="176" width="3" height="10" fill="#00e6ee"/><path d="M1025.5 171V172M1025.5 182V183" stroke="#ff3c3c"/><rect x="1024.5" y="172.5" width="2" height="9" fill="#000" stroke="#ff3c3c"/><path d="M1029.5 167V170M1029.5 180V183" stroke="#ff3c3c"/><rect x="1028.5" y="170.5" width="2" height="9" fill="#000" stroke="#ff3c3c"/><path d="M1033.5 165V176" stroke="#00e6ee"/><rect x="1032" y="168" width="3" height="8" fill="#00e6ee"/><path d="M1037.5 165V166M1037.5 174V177" stroke="#ff3c3c"/><rect x="1036.5" y="166.5" width="2" height="7" fill="#000" stroke="#ff3c3c"/><path d="M1041.5 162V165M1041.5 172V174" stroke="#ff3c3c"/><rect x="1040.5" y="165.5" width="2" height="6" fill="#000" stroke="#ff3c3c"/><path d="M1045.5 163V175" stroke="#00e6ee"/><rect x="1044" y="164" width="3" height="8" fill="#00e6ee"/><path d="M1049.5 161V163M1049.5 170V173" stroke="#ff3c3c"/><rect x="1048.5" y="163.5" width="2" height="6" fill="#000" stroke="#ff3c3c"/><path d="M1053.5 161V163M1053.5 170V173" stroke="#ff3c3c"/><rect x="1052.5" y="163.5" width="2" height="6" fill="#000" stroke="#ff3c3c"/><path d="M1057.5 161V171" stroke="#00e6ee"/><rect x="1056" y="162" width="3" height="8" fill="#00e6ee"/><path d="M1061.5 160V161M1061.5 168V170" stroke="#ff3c3c"/><rect x="1060.5" y="161.5" width="2" height="6" fill="#000" stroke="#ff3c3c"/><path d="M1064.5 157V158M1064.5 166V168" stroke="#ff3c3c"/><rect x="1063.5" y="158.5" width="2" height="7" fill="#000" stroke="#ff3c3c"/><path d="M1068.5 146V151M1068.5 164V166" stroke="#ff3c3c"/><rect x="1067.5" y="151.5" width="2" height="12" fill="#000" stroke="#ff3c3c"/><path d="M1072.5 143V168" stroke="#00e6ee"/><rect x="1071" y="150" width="3" height="15" fill="#00e6ee"/><path d="M1076.5 159V160M1076.5 168V170" stroke="#ff3c3c"/><rect x="1075.5" y="160.5" width="2" height="7" fill="#000" stroke="#ff3c3c"/><path d="M1080.5 161V172" stroke="#00e6ee"/><rect x="1079" y="162" width="3" height="8" fill="#00e6ee"/><path d="M1084.5 162V163M1084.5 170V172" stroke="#ff3c3c"/><rect x="1083.5" y="163.5" width="2" height="6" fill="#000" stroke="#ff3c3c"/><path d="M1088.5 163V174" stroke="#00e6ee"/><rect x="1087" y="164" width="3" height="8" fill="#00e6ee"/><path d="M1092.5 163V164M1092.5 172V174" stroke="#ff3c3c"/><rect x="1091.5" y="164.5" width="2" height="7" fill="#000" stroke="#ff3c3c"/><path d="M1096.5 164V176" stroke="#00e6ee"/><rect x="1095" y="165" width="3" height="9" fill="#00e6ee"/><path d="M1100.5 164V165M1100.5 174V176" stroke="#ff3c3c"/><rect x="1099.5" y="165.5" width="2" height="8" fill="#000" stroke="#ff3c3c"/><path d="M1104.5 165V178" stroke="#00e6ee"/><rect x="1103" y="166" width="3" height="10" fill="#00e6ee"/><path d="M1108.5 165V166M1108.5 176V178" stroke="#ff3c3c"/><rect x="1107.5" y="166.5" width="2" height="9" fill="#000" stroke="#ff3c3c"/><path d="M1112.5 166V180" stroke="#00e6ee"/><rect x="1111" y="167" width="3" height="11" fill="#00e6ee"/><path d="M1116.5 166V167M1116.5 178V180" stroke="#ff3c3c"/><rect x="1115.5" y="167.5" width="2" height="10" fill="#000" stroke="#ff3c3c"/><path d="M1120.5 167V182" stroke="#00e6ee"/><rect x="1119" y="168" width="3" height="12" fill="#00e6ee"/><path d="M1124.5 167V168M1124.5 180V182" stroke="#ff3c3c"/><rect x="1123.5" y="168.5" width="2" height="11" fill="#000" stroke="#ff3c3c"/><path d="M1128.5 165V166M1128.5 180V182" stroke="#ff3c3c"/><rect x="1127.5" y="166.5" width="2" height="13" fill="#000" stroke="#ff3c3c"/><path d="M1131.5 156V172" stroke="#00e6ee"/><rect x="1130" y="157" width="3" height="13" fill="#00e6ee"/><path d="M1135.5 123V123M1135.5 175V176" stroke="#ff3c3c"/><rect x="1134.5" y="123.5" width="2" height="51" fill="#000" stroke="#ff3c3c"/><path d="M1143.5 110V133" stroke="#00e6ee"/><rect x="1142" y="120" width="3" height="10" fill="#00e6ee"/><path d="M1147.5 113V115M1147.5 130V132" stroke="#ff3c3c"/><rect x="1146.5" y="115.5" width="2" height="14" fill="#000" stroke="#ff3c3c"/><path d="M1150.5 114V139" stroke="#00e6ee"/><rect x="1149" y="115" width="3" height="12" fill="#00e6ee"/><path d="M1154.5 116V121M1154.5 127V130" stroke="#ff3c3c"/><rect x="1153.5" y="121.5" width="2" height="5" fill="#000" stroke="#ff3c3c"/><path d="M1158.5 108V133" stroke="#00e6ee"/><rect x="1157" y="121" width="3" height="10" fill="#00e6ee"/><path d="M1162.5 124V145" stroke="#00e6ee"/><rect x="1161" y="132" width="3" height="10" fill="#00e6ee"/><path d="M1166.5 138V170" stroke="#00e6ee"/><rect x="1165" y="141" width="3" height="24" fill="#00e6ee"/></g><g shape-rendering="crispEdges"><rect x="404.5" y="695.5" width="2" height="1" fill="#000" stroke="#ff3c3c"/><rect x="408" y="695" width="3" height="1" fill="#00e6ee"/><rect x="411" y="695" width="3" height="1" fill="#00e6ee"/><rect x="415" y="695" width="3" height="1" fill="#00e6ee"/><rect x="419" y="695" width="3" height="1" fill="#00e6ee"/><rect x="423.5" y="695.5" width="2" height="1" fill="#000" stroke="#ff3c3c"/><rect x="427" y="695" width="3" height="1" fill="#00e6ee"/><rect x="431.5" y="695.5" width="2" height="1" fill="#000" stroke="#ff3c3c"/><rect x="434.5" y="695.5" width="2" height="1" fill="#000" stroke="#ff3c3c"/><rect x="438.5" y="695.5" width="2" height="1" fill="#000" stroke="#ff3c3c"/><rect x="442.5" y="695.5" width="2" height="1" fill="#000" stroke="#ff3c3c"/><rect x="446.5" y="695.5" width="2" height="1" fill="#000" stroke="#ff3c3c"/><rect x="450" y="694" width="3" height="2" fill="#00e6ee"/><rect x="454.5" y="694.5" width="2" height="2" fill="#000" stroke="#ff3c3c"/><rect x="458" y="694" width="3" height="2" fill="#00e6ee"/><rect x="462.5" y="693.5" width="2" height="3" fill="#000" stroke="#ff3c3c"/><rect x="465.5" y="694.5" width="2" height="2" fill="#000" stroke="#ff3c3c"/><rect x="469.5" y="693.5" width="2" height="3" fill="#000" stroke="#ff3c3c"/><rect x="473" y="692" width="3" height="4" fill="#00e6ee"/><rect x="477" y="692" width="3" height="4" fill="#00e6ee"/><rect x="481.5" y="692.5" width="2" height="4" fill="#000" stroke="#ff3c3c"/><rect x="485.5" y="692.5" width="2" height="4" fill="#000" stroke="#ff3c3c"/><rect x="489" y="692" width="3" height="4" fill="#00e6ee"/><rect x="493.5" y="691.5" width="2" height="5" fill="#000" stroke="#ff3c3c"/><rect x="496.5" y="691.5" width="2" height="5" fill="#000" stroke="#ff3c3c"/><rect x="500.5" y="691.5" width="2" height="5" fill="#000" stroke="#ff3c3c"/><rect x="504.5" y="685.5" width="2" height="11" fill="#000" stroke="#ff3c3c"/><rect x="508.5" y="686.5" width="2" height="10" fill="#000" stroke="#ff3c3c"/><rect x="511.5" y="688.5" width="2" height="8" fill="#000" stroke="#ff3c3c"/><rect x="515.5" y="681.5" width="2" height="15" fill="#000" stroke="#ff3c3c"/><rect x="519.5" y="685.5" width="2" height="11" fill="#000" stroke="#ff3c3c"/><rect x="523.5" y="677.5" width="2" height="19" fill="#000" stroke="#ff3c3c"/><rect x="527.5" y="674.5" width="2" height="22" fill="#000" stroke="#ff3c3c"/><rect x="531.5" y="664.5" width="2" height="32" fill="#000" stroke="#ff3c3c"/><rect x="535.5" y="667.5" width="2" height="29" fill="#000" stroke="#ff3c3c"/><rect x="538" y="675" width="3" height="21" fill="#00e6ee"/><rect x="541.5" y="671.5" width="2" height="25" fill="#000" stroke="#ff3c3c"/><rect x="545.5" y="667.5" width="2" height="29" fill="#000" stroke="#ff3c3c"/><rect x="549" y="660" width="3" height="36" fill="#00e6ee"/><rect x="553" y="652" width="3" height="44" fill="#00e6ee"/><rect x="557" y="628" width="3" height="68" fill="#00e6ee"/><rect x="561.5" y="661.5" width="2" height="35" fill="#000" stroke="#ff3c3c"/><rect x="565.5" y="670.5" width="2" height="26" fill="#000" stroke="#ff3c3c"/><rect x="569.5" y="661.5" width="2" height="35" fill="#000" stroke="#ff3c3c"/><rect x="573.5" y="649.5" width="2" height="47" fill="#000" stroke="#ff3c3c"/><rect x="576.5" y="661.5" width="2" height="35" fill="#000" stroke="#ff3c3c"/><rect x="580.5" y="665.5" width="2" height="31" fill="#000" stroke="#ff3c3c"/><rect x="584" y="625" width="3" height="71" fill="#00e6ee"/><rect x="588" y="652" width="3" height="44" fill="#00e6ee"/><rect x="593" y="651" width="3" height="45" fill="#00e6ee"/><rect x="597" y="657" width="3" height="39" fill="#00e6ee"/><rect x="601.5" y="649.5" width="2" height="47" fill="#000" stroke="#ff3c3c"/><rect x="605.5" y="648.5" width="2" height="48" fill="#000" stroke="#ff3c3c"/><rect x="608.5" y="654.5" width="2" height="42" fill="#000" stroke="#ff3c3c"/><rect x="612.5" y="620.5" width="2" height="76" fill="#000" stroke="#ff3c3c"/><rect x="615.5" y="637.5" width="2" height="59" fill="#000" stroke="#ff3c3c"/><rect x="619.5" y="588.5" width="2" height="108" fill="#000" stroke="#ff3c3c"/><rect x="623" y="601" width="3" height="95" fill="#00e6ee"/><rect x="627" y="623" width="3" height="73" fill="#00e6ee"/><rect x="631.5" y="643.5" width="2" height="53" fill="#000" stroke="#ff3c3c"/><rect x="635.5" y="601.5" width="2" height="95" fill="#000" stroke="#ff3c3c"/><rect x="639.5" y="658.5" width="2" height="38" fill="#000" stroke="#ff3c3c"/><rect x="643" y="649" width="3" height="47" fill="#00e6ee"/><rect x="647.5" y="660.5" width="2" height="36" fill="#000" stroke="#ff3c3c"/><rect x="651.5" y="653.5" width="2" height="43" fill="#000" stroke="#ff3c3c"/><rect x="654.5" y="667.5" width="2" height="29" fill="#000" stroke="#ff3c3c"/><rect x="658" y="671" width="3" height="25" fill="#00e6ee"/><rect x="662" y="666" width="3" height="30" fill="#00e6ee"/><rect x="665" y="667" width="3" height="29" fill="#00e6ee"/><rect x="669" y="664" width="3" height="32" fill="#00e6ee"/><rect x="673" y="665" width="3" height="31" fill="#00e6ee"/><rect x="677" y="661" width="3" height="35" fill="#00e6ee"/><rect x="681" y="662" width="3" height="34" fill="#00e6ee"/><rect x="685" y="673" width="3" height="23" fill="#00e6ee"/><rect x="689.5" y="673.5" width="2" height="23" fill="#000" stroke="#ff3c3c"/><rect x="693.5" y="670.5" width="2" height="26" fill="#000" stroke="#ff3c3c"/><rect x="697.5" y="662.5" width="2" height="34" fill="#000" stroke="#ff3c3c"/><rect x="700.5" y="674.5" width="2" height="22" fill="#000" stroke="#ff3c3c"/><rect x="704.5" y="668.5" width="2" height="28" fill="#000" stroke="#ff3c3c"/><rect x="708" y="664" width="3" height="32" fill="#00e6ee"/><rect x="712.5" y="659.5" width="2" height="37" fill="#000" stroke="#ff3c3c"/><rect x="716" y="662" width="3" height="34" fill="#00e6ee"/><rect x="720.5" y="669.5" width="2" height="27" fill="#000" stroke="#ff3c3c"/><rect x="724" y="674" width="3" height="22" fill="#00e6ee"/><rect x="728" y="666" width="3" height="30" fill="#00e6ee"/><rect x="732.5" y="671.5" width="2" height="25" fill="#000" stroke="#ff3c3c"/><rect x="735.5" y="663.5" width="2" height="33" fill="#000" stroke="#ff3c3c"/><rect x="739" y="665" width="3" height="31" fill="#00e6ee"/><rect x="743" y="673" width="3" height="23" fill="#00e6ee"/><rect x="747" y="662" width="3" height="34" fill="#00e6ee"/><rect x="751" y="647" width="3" height="49" fill="#00e6ee"/><rect x="755" y="678" width="3" height="18" fill="#00e6ee"/><rect x="759.5" y="673.5" width="2" height="23" fill="#000" stroke="#ff3c3c"/><rect x="762.5" y="675.5" width="2" height="21" fill="#000" stroke="#ff3c3c"/><rect x="767.5" y="652.5" width="2" height="44" fill="#000" stroke="#ff3c3c"/><rect x="771.5" y="667.5" width="2" height="29" fill="#000" stroke="#ff3c3c"/><rect x="775.5" y="673.5" width="2" height="23" fill="#000" stroke="#ff3c3c"/><rect x="778.5" y="682.5" width="2" height="14" fill="#000" stroke="#ff3c3c"/><rect x="782.5" y="669.5" width="2" height="27" fill="#000" stroke="#ff3c3c"/><rect x="786" y="678" width="3" height="18" fill="#00e6ee"/><rect x="790.5" y="674.5" width="2" height="22" fill="#000" stroke="#ff3c3c"/><rect x="793.5" y="670.5" width="2" height="26" fill="#000" stroke="#ff3c3c"/><rect x="797" y="679" width="3" height="17" fill="#00e6ee"/><rect x="801" y="674" width="3" height="22" fill="#00e6ee"/><rect x="805" y="666" width="3" height="30" fill="#00e6ee"/><rect x="808" y="674" width="3" height="22" fill="#00e6ee"/><rect x="812" y="661" width="3" height="35" fill="#00e6ee"/><rect x="817" y="671" width="3" height="25" fill="#00e6ee"/><rect x="820" y="669" width="3" height="27" fill="#00e6ee"/><rect x="824.5" y="679.5" width="2" height="17" fill="#000" stroke="#ff3c3c"/><rect x="829.5" y="667.5" width="2" height="29" fill="#000" stroke="#ff3c3c"/><rect x="833" y="673" width="3" height="23" fill="#00e6ee"/><rect x="836" y="678" width="3" height="18" fill="#00e6ee"/><rect x="839.5" y="676.5" width="2" height="20" fill="#000" stroke="#ff3c3c"/><rect x="843" y="685" width="3" height="11" fill="#00e6ee"/><rect x="846.5" y="686.5" width="2" height="10" fill="#000" stroke="#ff3c3c"/><rect x="850.5" y="678.5" width="2" height="18" fill="#000" stroke="#ff3c3c"/><rect x="854.5" y="687.5" width="2" height="9" fill="#000" stroke="#ff3c3c"/><rect x="858.5" y="682.5" width="2" height="14" fill="#000" stroke="#ff3c3c"/><rect x="862.5" y="683.5" width="2" height="13" fill="#000" stroke="#ff3c3c"/><rect x="866" y="682" width="3" height="14" fill="#00e6ee"/><rect x="870" y="683" width="3" height="13" fill="#00e6ee"/><rect x="875.5" y="683.5" width="2" height="13" fill="#000" stroke="#ff3c3c"/><rect x="879" y="684" width="3" height="12" fill="#00e6ee"/><rect x="883" y="681" width="3" height="15" fill="#00e6ee"/><rect x="886" y="687" width="3" height="9" fill="#00e6ee"/><rect x="889" y="684" width="3" height="12" fill="#00e6ee"/><rect x="893" y="689" width="3" height="7" fill="#00e6ee"/><rect x="898" y="683" width="3" height="13" fill="#00e6ee"/><rect x="902" y="684" width="3" height="12" fill="#00e6ee"/><rect x="905" y="688" width="3" height="8" fill="#00e6ee"/><rect x="909.5" y="684.5" width="2" height="12" fill="#000" stroke="#ff3c3c"/><rect x="913" y="688" width="3" height="8" fill="#00e6ee"/><rect x="917.5" y="682.5" width="2" height="14" fill="#000" stroke="#ff3c3c"/><rect x="921.5" y="688.5" width="2" height="8" fill="#000" stroke="#ff3c3c"/><rect x="925.5" y="683.5" width="2" height="13" fill="#000" stroke="#ff3c3c"/><rect x="929.5" y="689.5" width="2" height="7" fill="#000" stroke="#ff3c3c"/><rect x="932" y="688" width="3" height="8" fill="#00e6ee"/><rect x="936" y="686" width="3" height="10" fill="#00e6ee"/><rect x="940" y="685" width="3" height="11" fill="#00e6ee"/><rect x="944" y="688" width="3" height="8" fill="#00e6ee"/><rect x="948" y="681" width="3" height="15" fill="#00e6ee"/><rect x="952" y="669" width="3" height="27" fill="#00e6ee"/><rect x="956.5" y="676.5" width="2" height="20" fill="#000" stroke="#ff3c3c"/><rect x="960.5" y="662.5" width="2" height="34" fill="#000" stroke="#ff3c3c"/><rect x="963.5" y="658.5" width="2" height="38" fill="#000" stroke="#ff3c3c"/><rect x="967.5" y="662.5" width="2" height="34" fill="#000" stroke="#ff3c3c"/><rect x="971.5" y="658.5" width="2" height="38" fill="#000" stroke="#ff3c3c"/><rect x="976.5" y="662.5" width="2" height="34" fill="#000" stroke="#ff3c3c"/><rect x="980" y="647" width="3" height="49" fill="#00e6ee"/><rect x="984.5" y="638.5" width="2" height="58" fill="#000" stroke="#ff3c3c"/><rect x="988.5" y="657.5" width="2" height="39" fill="#000" stroke="#ff3c3c"/><rect x="992.5" y="651.5" width="2" height="45" fill="#000" stroke="#ff3c3c"/><rect x="996" y="631" width="3" height="65" fill="#00e6ee"/><rect x="1000.5" y="608.5" width="2" height="88" fill="#000" stroke="#ff3c3c"/><rect x="1004.5" y="612.5" width="2" height="84" fill="#000" stroke="#ff3c3c"/><rect x="1008" y="620" width="3" height="76" fill="#00e6ee"/><rect x="1012.5" y="611.5" width="2" height="85" fill="#000" stroke="#ff3c3c"/><rect x="1016.5" y="641.5" width="2" height="55" fill="#000" stroke="#ff3c3c"/><rect x="1020" y="641" width="3" height="55" fill="#00e6ee"/><rect x="1024.5" y="618.5" width="2" height="78" fill="#000" stroke="#ff3c3c"/><rect x="1028.5" y="642.5" width="2" height="54" fill="#000" stroke="#ff3c3c"/><rect x="1032" y="645" width="3" height="51" fill="#00e6ee"/><rect x="1036.5" y="614.5" width="2" height="82" fill="#000" stroke="#ff3c3c"/><rect x="1040.5" y="621.5" width="2" height="75" fill="#000" stroke="#ff3c3c"/><rect x="1044" y="623" width="3" height="73" fill="#00e6ee"/><rect x="1048.5" y="609.5" width="2" height="87" fill="#000" stroke="#ff3c3c"/><rect x="1052.5" y="603.5" width="2" height="93" fill="#000" stroke="#ff3c3c"/><rect x="1056" y="644" width="3" height="52" fill="#00e6ee"/><rect x="1060.5" y="637.5" width="2" height="59" fill="#000" stroke="#ff3c3c"/><rect x="1063.5" y="645.5" width="2" height="51" fill="#000" stroke="#ff3c3c"/><rect x="1067.5" y="643.5" width="2" height="53" fill="#000" stroke="#ff3c3c"/><rect x="1071" y="627" width="3" height="69" fill="#00e6ee"/><rect x="1075.5" y="648.5" width="2" height="48" fill="#000" stroke="#ff3c3c"/><rect x="1079" y="608" width="3" height="88" fill="#00e6ee"/><rect x="1083.5" y="648.5" width="2" height="48" fill="#000" stroke="#ff3c3c"/><rect x="1087" y="636" width="3" height="60" fill="#00e6ee"/><rect x="1091.5" y="608.5" width="2" height="88" fill="#000" stroke="#ff3c3c"/><rect x="1095" y="626" width="3" height="70" fill="#00e6ee"/><rect x="1099.5" y="645.5" width="2" height="51" fill="#000" stroke="#ff3c3c"/><rect x="1103" y="642" width="3" height="54" fill="#00e6ee"/><rect x="1107.5" y="633.5" width="2" height="63" fill="#000" stroke="#ff3c3c"/><rect x="1111" y="622" width="3" height="74" fill="#00e6ee"/><rect x="1115.5" y="636.5" width="2" height="60" fill="#000" stroke="#ff3c3c"/><rect x="1119" y="647" width="3" height="49" fill="#00e6ee"/><rect x="1123.5" y="637.5" width="2" height="59" fill="#000" stroke="#ff3c3c"/><rect x="1127.5" y="625.5" width="2" height="71" fill="#000" stroke="#ff3c3c"/><rect x="1130" y="624" width="3" height="72" fill="#00e6ee"/><rect x="1134.5" y="625.5" width="2" height="71" fill="#000" stroke="#ff3c3c"/><rect x="1142" y="629" width="3" height="67" fill="#00e6ee"/><rect x="1146.5" y="654.5" width="2" height="42" fill="#000" stroke="#ff3c3c"/><rect x="1149" y="647" width="3" height="49" fill="#00e6ee"/><rect x="1153.5" y="649.5" width="2" height="47" fill="#000" stroke="#ff3c3c"/><rect x="1157" y="650" width="3" height="46" fill="#00e6ee"/><rect x="1161" y="654" width="3" height="42" fill="#00e6ee"/><rect x="1165" y="643" width="3" height="53" fill="#00e6ee"/><path d="M386 695.9L394 695.1L402 694.7L410 693.9L418 694.2L426 693.8L434 692.8L442 691.6L450 690.7L458 689.8L466 689.0L474 688.1L482 686.0L490 685.8L498 683.9L506 680.5L510 675.8L514 675.1L518 673.6L522 667.9L526 664.6L530 660.9L534 656.3L538 654.1L542 651.9L546 651.6L550 651.9L554 649.7L558 649.5L562 646.9L566 647.4L570 641.3L574 642.4L578 637.0L582 638.6L586 634.9L590 635.5L594 638.1L598 634.7L602 635.5L606 632.6L610 629.5L614 625.9L618 624.1L622 620.3L626 623.5L630 626.1L634 622.0L638 617.2L642 612.0L646 611.8L650 602.5L654 607.6L658 602.1L662 599.5L666 599.6L670 600.4L674 602.7L678 599.0L682 598.1L686 595.0L690 592.1L694 598.4L698 592.1L702 595.3L706 593.0L710 588.3L714 593.7L718 595.5L722 596.2L726 591.3L730 591.4L734 598.3L738 596.6L742 597.4L746 597.2L750 601.4L754 605.6L758 602.9L762 601.9L766 598.2L770 585.3L774 586.7L778 592.2L782 597.6L786 595.2L790 593.6L794 595.8L798 598.0L802 600.2L806 604.3L810 611.1L814 623.4L818 630.8L822 634.4L826 635.6L830 637.2L834 638.7L838 641.4L842 641.1L846 639.5L850 642.4L854 642.6L858 642.4L862 640.0L866 642.2L870 643.2L874 641.9L878 640.8L882 642.9L886 642.2L890 642.7L894 644.3L898 643.2L902 642.7L906 638.7L910 637.3L914 635.7L918 634.0L922 634.6L926 634.0L930 635.6L934 634.8L938 635.2L942 639.2L946 637.1L950 633.0L954 629.5L958 625.9L962 623.7L966 622.1L970 613.2L974 609.4L978 602.2L982 604.4L986 599.6L990 600.4L994 599.3L998 598.6L1002 600.0L1006 597.1L1010 601.2L1014 600.5L1018 596.8L1022 600.2L1026 599.5L1030 598.3L1034 598.9L1038 598.5L1042 597.2L1046 595.9L1050 597.4L1054 594.8L1058 597.9L1062 597.2L1066 596.0L1070 595.3L1074 596.5L1078 595.3L1082 597.1L1086 596.1L1090 594.9L1094 595.9L1098 591.7L1102 594.9L1106 595.2L1110 594.6L1114 595.6L1118 593.8L1122 590.8L1126 590.4L1130 593.1L1134 594.5L1138 591.4L1142 591.5L1146 589.3L1150 588.9L1154 591.3L1158 589.6L1162 589.5L1166 590.3L1170 588.1L1174 592.2" fill="none" stroke="#fff" stroke-width="1" shape-rendering="geometricPrecision"/></g><g shape-rendering="geometricPrecision"><path d="M265.5 841V878" stroke="#ff3c3c"/><path d="M269.5 843V878" stroke="#ff3c3c"/><path d="M273.5 847V878" stroke="#ff3c3c"/><path d="M277.5 851V878" stroke="#ff3c3c"/><path d="M281.5 856V878" stroke="#ff3c3c"/><path d="M285.5 860V878" stroke="#ff3c3c"/><path d="M289.5 864V878" stroke="#ff3c3c"/><path d="M293.5 868V878" stroke="#ff3c3c"/><path d="M297.5 867V878" stroke="#ff3c3c"/><path d="M301.5 866V878" stroke="#ff3c3c"/><path d="M305.5 865V878" stroke="#ff3c3c"/><path d="M309.5 865V878" stroke="#ff3c3c"/><path d="M313.5 864V878" stroke="#ff3c3c"/><path d="M317.5 864V878" stroke="#ff3c3c"/><path d="M321.5 864V878" stroke="#ff3c3c"/><path d="M325.5 864V878" stroke="#ff3c3c"/><path d="M329.5 864V878" stroke="#ff3c3c"/><path d="M333.5 865V878" stroke="#ff3c3c"/><path d="M337.5 865V878" stroke="#ff3c3c"/><path d="M341.5 866V878" stroke="#ff3c3c"/><path d="M345.5 872V878" stroke="#ff3c3c"/><path d="M349.5 876V878" stroke="#ff3c3c"/><path d="M353.5 872V878" stroke="#ff3c3c"/><path d="M357.5 870V878" stroke="#ff3c3c"/><path d="M361.5 868V878" stroke="#ff3c3c"/><path d="M365.5 866V878" stroke="#ff3c3c"/><path d="M369.5 864V878" stroke="#ff3c3c"/><path d="M373.5 862V878" stroke="#ff3c3c"/><path d="M377.5 860V878" stroke="#ff3c3c"/><path d="M381.5 858V878" stroke="#ff3c3c"/><path d="M385.5 856V878" stroke="#ff3c3c"/><path d="M389.5 858V878" stroke="#ff3c3c"/><path d="M393.5 860V878" stroke="#ff3c3c"/><path d="M397.5 863V878" stroke="#ff3c3c"/><path d="M401.5 866V878" stroke="#ff3c3c"/><path d="M405.5 872V878" stroke="#ff3c3c"/><path d="M409.5 878V884" stroke="#00e6ee"/><path d="M413.5 878V884" stroke="#00e6ee"/><path d="M417.5 878V884" stroke="#00e6ee"/><path d="M421.5 878V884" stroke="#00e6ee"/><path d="M425.5 878V884" stroke="#00e6ee"/><path d="M429.5 878V884" stroke="#00e6ee"/><path d="M433.5 878V884" stroke="#00e6ee"/><path d="M437.5 878V884" stroke="#00e6ee"/><path d="M441.5 872V878" stroke="#ff3c3c"/><path d="M445.5 867V878" stroke="#ff3c3c"/><path d="M449.5 862V878" stroke="#ff3c3c"/><path d="M453.5 856V878" stroke="#ff3c3c"/><path d="M457.5 850V878" stroke="#ff3c3c"/><path d="M461.5 844V878" stroke="#ff3c3c"/><path d="M465.5 838V878" stroke="#ff3c3c"/><path d="M469.5 839V878" stroke="#ff3c3c"/><path d="M473.5 843V878" stroke="#ff3c3c"/><path d="M477.5 846V878" stroke="#ff3c3c"/><path d="M481.5 850V878" stroke="#ff3c3c"/><path d="M485.5 855V878" stroke="#ff3c3c"/><path d="M489.5 860V878" stroke="#ff3c3c"/><path d="M493.5 866V878" stroke="#ff3c3c"/><path d="M497.5 871V878" stroke="#ff3c3c"/><path d="M501.5 878V884" stroke="#00e6ee"/><path d="M505.5 870V878" stroke="#ff3c3c"/><path d="M509.5 864V878" stroke="#ff3c3c"/><path d="M513.5 857V878" stroke="#ff3c3c"/><path d="M517.5 851V878" stroke="#ff3c3c"/><path d="M521.5 845V878" stroke="#ff3c3c"/><path d="M525.5 839V878" stroke="#ff3c3c"/><path d="M529.5 834V878" stroke="#ff3c3c"/><path d="M533.5 829V878" stroke="#ff3c3c"/><path d="M537.5 824V878" stroke="#ff3c3c"/><path d="M541.5 826V878" stroke="#ff3c3c"/><path d="M545.5 832V878" stroke="#ff3c3c"/><path d="M549.5 837V878" stroke="#ff3c3c"/><path d="M553.5 847V878" stroke="#ff3c3c"/><path d="M557.5 861V878" stroke="#ff3c3c"/><path d="M561.5 876V878" stroke="#ff3c3c"/><path d="M565.5 878V884" stroke="#00e6ee"/><path d="M569.5 878V884" stroke="#00e6ee"/><path d="M573.5 878V884" stroke="#00e6ee"/><path d="M577.5 878V884" stroke="#00e6ee"/><path d="M581.5 878V884" stroke="#00e6ee"/><path d="M585.5 878V884" stroke="#00e6ee"/><path d="M589.5 878V884" stroke="#00e6ee"/><path d="M593.5 878V884" stroke="#00e6ee"/><path d="M597.5 878V884" stroke="#00e6ee"/><path d="M601.5 878V884" stroke="#00e6ee"/><path d="M605.5 878V884" stroke="#00e6ee"/><path d="M609.5 878V884" stroke="#00e6ee"/><path d="M613.5 878V884" stroke="#00e6ee"/><path d="M617.5 872V878" stroke="#ff3c3c"/><path d="M621.5 864V878" stroke="#ff3c3c"/><path d="M625.5 857V878" stroke="#ff3c3c"/><path d="M629.5 850V878" stroke="#ff3c3c"/><path d="M633.5 846V878" stroke="#ff3c3c"/><path d="M637.5 843V878" stroke="#ff3c3c"/><path d="M641.5 840V878" stroke="#ff3c3c"/><path d="M645.5 844V878" stroke="#ff3c3c"/><path d="M649.5 848V878" stroke="#ff3c3c"/><path d="M653.5 852V878" stroke="#ff3c3c"/><path d="M657.5 860V878" stroke="#ff3c3c"/><path d="M661.5 869V878" stroke="#ff3c3c"/><path d="M665.5 878V884" stroke="#00e6ee"/><path d="M669.5 878V884" stroke="#00e6ee"/><path d="M673.5 878V884" stroke="#00e6ee"/><path d="M677.5 878V884" stroke="#00e6ee"/><path d="M681.5 878V884" stroke="#00e6ee"/><path d="M685.5 878V884" stroke="#00e6ee"/><path d="M689.5 878V884" stroke="#00e6ee"/><path d="M693.5 878V884" stroke="#00e6ee"/><path d="M697.5 878V884" stroke="#00e6ee"/><path d="M701.5 878V884" stroke="#00e6ee"/><path d="M705.5 878V884" stroke="#00e6ee"/><path d="M709.5 878V884" stroke="#00e6ee"/><path d="M713.5 878V884" stroke="#00e6ee"/><path d="M717.5 878V884" stroke="#00e6ee"/><path d="M721.5 878V884" stroke="#00e6ee"/><path d="M725.5 878V884" stroke="#00e6ee"/><path d="M729.5 878V884" stroke="#00e6ee"/><path d="M733.5 878V884" stroke="#00e6ee"/><path d="M737.5 878V884" stroke="#00e6ee"/><path d="M741.5 878V884" stroke="#00e6ee"/><path d="M745.5 878V884" stroke="#00e6ee"/><path d="M749.5 878V884" stroke="#00e6ee"/><path d="M753.5 878V884" stroke="#00e6ee"/><path d="M757.5 878V884" stroke="#00e6ee"/><path d="M761.5 878V884" stroke="#00e6ee"/><path d="M765.5 878V884" stroke="#00e6ee"/><path d="M769.5 878V884" stroke="#00e6ee"/><path d="M773.5 878V884" stroke="#00e6ee"/><path d="M777.5 870V878" stroke="#ff3c3c"/><path d="M781.5 858V878" stroke="#ff3c3c"/><path d="M785.5 847V878" stroke="#ff3c3c"/><path d="M789.5 835V878" stroke="#ff3c3c"/><path d="M793.5 825V878" stroke="#ff3c3c"/><path d="M797.5 817V878" stroke="#ff3c3c"/><path d="M801.5 809V878" stroke="#ff3c3c"/><path d="M805.5 807V878" stroke="#ff3c3c"/><path d="M809.5 825V878" stroke="#ff3c3c"/><path d="M813.5 851V878" stroke="#ff3c3c"/><path d="M817.5 878V884" stroke="#00e6ee"/><path d="M821.5 878V884" stroke="#00e6ee"/><path d="M825.5 878V884" stroke="#00e6ee"/><path d="M829.5 878V884" stroke="#00e6ee"/><path d="M833.5 878V884" stroke="#00e6ee"/><path d="M837.5 878V884" stroke="#00e6ee"/><path d="M841.5 878V884" stroke="#00e6ee"/><path d="M845.5 878V884" stroke="#00e6ee"/><path d="M849.5 878V884" stroke="#00e6ee"/><path d="M853.5 878V884" stroke="#00e6ee"/><path d="M857.5 878V884" stroke="#00e6ee"/><path d="M861.5 878V884" stroke="#00e6ee"/><path d="M865.5 876V878" stroke="#ff3c3c"/><path d="M869.5 868V878" stroke="#ff3c3c"/><path d="M873.5 873V878" stroke="#ff3c3c"/><path d="M877.5 878V884" stroke="#00e6ee"/><path d="M881.5 878V884" stroke="#00e6ee"/><path d="M885.5 878V884" stroke="#00e6ee"/><path d="M889.5 878V884" stroke="#00e6ee"/><path d="M893.5 878V884" stroke="#00e6ee"/><path d="M897.5 878V884" stroke="#00e6ee"/><path d="M901.5 878V884" stroke="#00e6ee"/><path d="M905.5 878V884" stroke="#00e6ee"/><path d="M909.5 878V884" stroke="#00e6ee"/><path d="M913.5 878V884" stroke="#00e6ee"/><path d="M917.5 878V884" stroke="#00e6ee"/><path d="M921.5 870V878" stroke="#ff3c3c"/><path d="M925.5 867V878" stroke="#ff3c3c"/><path d="M929.5 867V878" stroke="#ff3c3c"/><path d="M933.5 871V878" stroke="#ff3c3c"/><path d="M937.5 876V878" stroke="#ff3c3c"/><path d="M941.5 878V884" stroke="#00e6ee"/><path d="M945.5 878V884" stroke="#00e6ee"/><path d="M949.5 878V884" stroke="#00e6ee"/><path d="M953.5 878V884" stroke="#00e6ee"/><path d="M957.5 878V884" stroke="#00e6ee"/><path d="M961.5 878V884" stroke="#00e6ee"/><path d="M965.5 878V884" stroke="#00e6ee"/><path d="M969.5 878V884" stroke="#00e6ee"/><path d="M973.5 872V878" stroke="#ff3c3c"/><path d="M977.5 860V878" stroke="#ff3c3c"/><path d="M981.5 853V878" stroke="#ff3c3c"/><path d="M985.5 848V878" stroke="#ff3c3c"/><path d="M989.5 851V878" stroke="#ff3c3c"/><path d="M993.5 854V878" stroke="#ff3c3c"/><path d="M997.5 856V878" stroke="#ff3c3c"/><path d="M1001.5 859V878" stroke="#ff3c3c"/><path d="M1005.5 861V878" stroke="#ff3c3c"/><path d="M1009.5 859V878" stroke="#ff3c3c"/><path d="M1013.5 856V878" stroke="#ff3c3c"/><path d="M1017.5 853V878" stroke="#ff3c3c"/><path d="M1021.5 850V878" stroke="#ff3c3c"/><path d="M1025.5 846V878" stroke="#ff3c3c"/><path d="M1029.5 842V878" stroke="#ff3c3c"/><path d="M1033.5 838V878" stroke="#ff3c3c"/><path d="M1037.5 834V878" stroke="#ff3c3c"/><path d="M1041.5 830V878" stroke="#ff3c3c"/><path d="M1045.5 826V878" stroke="#ff3c3c"/><path d="M1049.5 822V878" stroke="#ff3c3c"/><path d="M1053.5 818V878" stroke="#ff3c3c"/><path d="M1057.5 814V878" stroke="#ff3c3c"/><path d="M1061.5 810V878" stroke="#ff3c3c"/><path d="M1065.5 806V878" stroke="#ff3c3c"/><path d="M1069.5 803V878" stroke="#ff3c3c"/><path d="M1073.5 812V878" stroke="#ff3c3c"/><path d="M1077.5 824V878" stroke="#ff3c3c"/><path d="M1081.5 837V878" stroke="#ff3c3c"/><path d="M1085.5 853V878" stroke="#ff3c3c"/><path d="M1089.5 868V878" stroke="#ff3c3c"/><path d="M1093.5 878V884" stroke="#00e6ee"/><path d="M1097.5 878V884" stroke="#00e6ee"/><path d="M1101.5 878V884" stroke="#00e6ee"/><path d="M1105.5 878V884" stroke="#00e6ee"/><path d="M1109.5 878V884" stroke="#00e6ee"/><path d="M1113.5 878V884" stroke="#00e6ee"/><path d="M1117.5 878V884" stroke="#00e6ee"/><path d="M1121.5 878V884" stroke="#00e6ee"/><path d="M1125.5 878V884" stroke="#00e6ee"/><path d="M1129.5 878V884" stroke="#00e6ee"/><path d="M1133.5 878V884" stroke="#00e6ee"/><path d="M1137.5 866V878" stroke="#ff3c3c"/><path d="M1141.5 858V878" stroke="#ff3c3c"/><path d="M1145.5 850V878" stroke="#ff3c3c"/><path d="M1149.5 843V878" stroke="#ff3c3c"/><path d="M1153.5 850V878" stroke="#ff3c3c"/><path d="M1157.5 858V878" stroke="#ff3c3c"/><path d="M1161.5 876V878" stroke="#ff3c3c"/><path d="M1165.5 878V884" stroke="#00e6ee"/><path d="M1169.5 878V884" stroke="#00e6ee"/><path d="M1173.5 878V884" stroke="#00e6ee"/><path d="M265 882L275 878L290 873L310 868L330 865L345 868L355 866L370 853L385 843L400 847L415 852L425 861L435 856L445 836L455 813L470 795L485 796L500 802L510 781L520 766L540 731L547 721L553 720L558 726L570 753L590 771L600 784L605 787L610 785L620 756L635 731L648 720L655 718L660 722L665 731L680 771L700 793L720 803L740 841L755 890L772 890L785 836L795 801L803 786L808 790L812 798L825 841L840 890L858 890L868 866L878 876L895 886L915 872L925 865L932 860L945 890L972 890L985 871L997 862L1029 851L1038 837L1056 821L1067 783L1072 770L1080 775L1087 783L1101 796L1120 805L1131 808L1135 800L1140 785L1150 765L1156 770L1163 783L1168 800L1174 826" fill="none" stroke="#fff" stroke-width="1" stroke-linejoin="round"/><path d="M280 882L300 878L330 868L360 866L380 851L400 848L420 852L435 856L450 841L470 811L485 803L500 802L510 791L520 783L540 761L552 739L558 735L565 738L580 751L600 768L612 773L625 768L645 746L655 734L660 731L666 734L672 741L690 766L710 786L730 808L750 841L770 868L775 871L790 851L805 821L812 812L817 815L822 823L840 856L860 871L880 867L900 873L920 872L930 868L945 875L960 890L983 890L1015 862L1038 844L1056 826L1067 805L1074 796L1083 789L1092 790L1101 794L1120 800L1131 803L1140 795L1151 785L1156 782L1160 783L1174 800" fill="none" stroke="#e6e600" stroke-width="1" stroke-linejoin="round"/></g><g shape-rendering="geometricPrecision"><path d="M279.8 530.5h3v3.5h2l-3.5 3.5l-3.5-3.5h2z" fill="#000" stroke="#28ff28" stroke-width="1"/><path d="M310.5 532.0h3v3.5h2l-3.5 3.5l-3.5-3.5h2z" fill="#000" stroke="#28ff28" stroke-width="1"/><path d="M333.5 526.0h3v3.5h2l-3.5 3.5l-3.5-3.5h2z" fill="#000" stroke="#28ff28" stroke-width="1"/><path d="M391.5 506.5h3v3.5h2l-3.5 3.5l-3.5-3.5h2z" fill="#000" stroke="#28ff28" stroke-width="1"/><path d="M473.0 447.0h3v3.5h2l-3.5 3.5l-3.5-3.5h2z" fill="#000" stroke="#28ff28" stroke-width="1"/><path d="M538.7 353.5h3v3.5h2l-3.5 3.5l-3.5-3.5h2z" fill="#000" stroke="#28ff28" stroke-width="1"/><path d="M593.1 345.5h3v3.5h2l-3.5 3.5l-3.5-3.5h2z" fill="#000" stroke="#28ff28" stroke-width="1"/><path d="M642.8 262.5h3v3.5h2l-3.5 3.5l-3.5-3.5h2z" fill="#000" stroke="#28ff28" stroke-width="1"/><path d="M658.8 234.5h3v3.5h2l-3.5 3.5l-3.5-3.5h2z" fill="#000" stroke="#28ff28" stroke-width="1"/><path d="M723.7 249.5h3v3.5h2l-3.5 3.5l-3.5-3.5h2z" fill="#000" stroke="#28ff28" stroke-width="1"/><path d="M874.5 244.5h3v3.5h2l-3.5 3.5l-3.5-3.5h2z" fill="#28ff28" stroke="#28ff28" stroke-width="1"/><path d="M932.5 234.5h3v3.5h2l-3.5 3.5l-3.5-3.5h2z" fill="#28ff28" stroke="#28ff28" stroke-width="1"/><path d="M300 541.5l3.5 3.5h-1.5v3.5h-4v-3.5h-1.5z" fill="#ff1e1e" stroke="#ff1e1e" stroke-width="1"/><path d="M316 545.5l3.5 3.5h-1.5v3.5h-4v-3.5h-1.5z" fill="#ff1e1e" stroke="#ff1e1e" stroke-width="1"/><path d="M354 540.5l3.5 3.5h-1.5v3.5h-4v-3.5h-1.5z" fill="#ff1e1e" stroke="#ff1e1e" stroke-width="1"/><path d="M432 518.5l3.5 3.5h-1.5v3.5h-4v-3.5h-1.5z" fill="#ff1e1e" stroke="#ff1e1e" stroke-width="1"/><path d="M501 459.5l3.5 3.5h-1.5v3.5h-4v-3.5h-1.5z" fill="#ff1e1e" stroke="#ff1e1e" stroke-width="1"/><path d="M577.8 363.5l3.5 3.5h-1.5v3.5h-4v-3.5h-1.5z" fill="#ff1e1e" stroke="#ff1e1e" stroke-width="1"/><path d="M606.3 359.5l3.5 3.5h-1.5v3.5h-4v-3.5h-1.5z" fill="#ff1e1e" stroke="#ff1e1e" stroke-width="1"/><path d="M648.7 280.0l3.5 3.5h-1.5v3.5h-4v-3.5h-1.5z" fill="#ff1e1e" stroke="#ff1e1e" stroke-width="1"/><path d="M694.4 282.5l3.5 3.5h-1.5v3.5h-4v-3.5h-1.5z" fill="#ff1e1e" stroke="#ff1e1e" stroke-width="1"/><path d="M907 265.5l3.5 3.5h-1.5v3.5h-4v-3.5h-1.5z" fill="#000" stroke="#ff1e1e" stroke-width="1"/><path d="M299 538L313 546" stroke="#ff4646" stroke-width="3" stroke-linecap="round"/><path d="M317 541L336 541" stroke="#ff4646" stroke-width="3" stroke-linecap="round"/><path d="M354 538L394 521" stroke="#ff4646" stroke-width="3" stroke-linecap="round"/><path d="M432 517L475 463" stroke="#ff4646" stroke-width="3" stroke-linecap="round"/><path d="M501 457L541 373" stroke="#ff4646" stroke-width="3" stroke-linecap="round"/><path d="M577 352L596 359" stroke="#ff4646" stroke-width="3" stroke-linecap="round"/><path d="M606 350L645 278" stroke="#ff4646" stroke-width="3" stroke-linecap="round"/><path d="M648 268L661 268" stroke="#ff4646" stroke-width="3" stroke-linecap="round"/><path d="M694 262L726 262" stroke="#ff4646" stroke-width="3" stroke-linecap="round"/><path d="M876 260H907" stroke="#1ee61e" stroke-width="3"/></g><path d="M1139.5 96V126M1137 120.5H1139" stroke="#fff"/><path d="M1109 104.5H1137" stroke="#ff3c3c" stroke-dasharray="2 1"/><path d="M1113 101.5L1109 104.5L1113 107.5" stroke="#ff3c3c" fill="none" shape-rendering="geometricPrecision"/><text x="238" y="75" fill="#fff" font-size="12" font-family="Liberation Sans, Noto Sans CJK SC, sans-serif">苹果<tspan font-family="Liberation Mono, Noto Sans CJK SC, monospace" font-size="11" letter-spacing="-0.6">1901(CZCE AP901)</tspan>自<tspan font-family="Liberation Mono, Noto Sans CJK SC, monospace" font-size="11">2</tspan>小时</text><text x="269" y="92" fill="#e6e600" font-size="12" font-family="Liberation Sans, Noto Sans CJK SC, sans-serif" >模型：加减仓</text><text x="349" y="92" fill="#fff" font-size="12" font-family="Liberation Sans, Noto Sans CJK SC, sans-serif" >K 25.93</text><text x="410" y="92" fill="#e6e600" font-size="12" font-family="Liberation Sans, Noto Sans CJK SC, sans-serif" >D 40.80</text><text x="1438" y="76" fill="#e6e600" font-size="12" font-family="Liberation Sans, Noto Sans CJK SC, sans-serif">信号区间<tspan font-size="11">:20180116</tspan>～</text><text x="1610" y="93" fill="#e6e600" font-size="12" font-family="Liberation Sans, Noto Sans CJK SC, sans-serif" >交易时间</text><text x="1672" y="86" fill="#e6e600" font-size="24" font-family="Liberation Serif, Noto Serif CJK SC, serif" textLength="94" lengthAdjust="spacingAndGlyphs">苹果1901</text><text x="1671" y="112" fill="#fff" font-size="14" font-family="Liberation Sans, Noto Sans CJK SC, sans-serif" >卖出</text><text x="1671" y="141" fill="#fff" font-size="14" font-family="Liberation Sans, Noto Sans CJK SC, sans-serif" >买入</text><text x="1671" y="169" fill="#fff" font-size="14" font-family="Liberation Sans, Noto Sans CJK SC, sans-serif" >最新</text><text x="1768" y="115" fill="#fff" font-size="22" font-family="Liberation Sans, sans-serif" stroke="#2a6cd6" stroke-width=".4">0</text><text x="1768" y="144" fill="#fff" font-size="22" font-family="Liberation Sans, sans-serif" stroke="#2a6cd6" stroke-width=".4">0</text><text x="1072.6" y="110" fill="#ff3c3c" font-size="12.5" font-family="Liberation Sans, Noto Sans CJK SC, sans-serif" textLength="34" lengthAdjust="spacingAndGlyphs">12315</text><text x="780" y="182" fill="#ff3c3c" font-size="12.5" font-family="Liberation Sans, Noto Sans CJK SC, sans-serif" textLength="35" lengthAdjust="spacingAndGlyphs">11126</text><text x="744" y="334" fill="#00e6ee" font-size="12.5" font-family="Liberation Sans, Noto Sans CJK SC, sans-serif" textLength="27.5" lengthAdjust="spacingAndGlyphs">9370</text><text x="941.4" y="324" fill="#00e6ee" font-size="12.5" font-family="Liberation Sans, Noto Sans CJK SC, sans-serif" textLength="27.5" lengthAdjust="spacingAndGlyphs">9493</text><text x="266" y="563" fill="#e6e600" font-size="12" font-family="Liberation Sans, Noto Sans CJK SC, sans-serif" >118天</text><text x="272" y="566" fill="#00e6ee" font-size="12" font-family="Liberation Sans, Noto Sans CJK SC, sans-serif" >6900</text><text x="234" y="431" fill="#a8a8a8" font-size="12.5" font-family="Liberation Sans, Noto Sans CJK SC, sans-serif" textLength="27" lengthAdjust="spacingAndGlyphs">8000</text><text x="269.8" y="582.5" fill="#e6e600" font-size="12.5" font-family="Liberation Sans, Noto Sans CJK SC, sans-serif" textLength="17" lengthAdjust="spacingAndGlyphs">CJL</text><text x="299.3" y="582.5" fill="#fff" font-size="12.5" font-family="Liberation Sans, Noto Sans CJK SC, sans-serif" textLength="101" lengthAdjust="spacingAndGlyphs">199040.00(52:48)</text><text x="419.6" y="582.5" fill="#fff" font-size="12.5" font-family="Liberation Sans, Noto Sans CJK SC, sans-serif" textLength="90" lengthAdjust="spacingAndGlyphs">OPID 199160.00</text><text x="236" y="646" fill="#a8a8a8" font-size="12.5" font-family="Liberation Sans, Noto Sans CJK SC, sans-serif">50<tspan font-size="12">万</tspan></text><text x="269.8" y="709.5" fill="#e6e600" font-size="12.5" font-family="Liberation Sans, Noto Sans CJK SC, sans-serif" textLength="84" lengthAdjust="spacingAndGlyphs">MACD(12,26,9)</text><text x="362" y="709.5" fill="#fff" font-size="12.5" font-family="Liberation Sans, Noto Sans CJK SC, sans-serif" textLength="66" lengthAdjust="spacingAndGlyphs">DIFF 136.23</text><text x="447.4" y="709.5" fill="#e6e600" font-size="12.5" font-family="Liberation Sans, Noto Sans CJK SC, sans-serif" textLength="63.5" lengthAdjust="spacingAndGlyphs">DEA 213.01</text><text x="535" y="709.5" fill="#fff" font-size="12.5" font-family="Liberation Sans, Noto Sans CJK SC, sans-serif" textLength="42.5" lengthAdjust="spacingAndGlyphs">-153.55</text><text x="241" y="809" fill="#a8a8a8" font-size="12.5" font-family="Liberation Sans, Noto Sans CJK SC, sans-serif" textLength="20.5" lengthAdjust="spacingAndGlyphs">200</text><text x="255.4" y="881" fill="#a8a8a8" font-size="12.5" font-family="Liberation Sans, Noto Sans CJK SC, sans-serif" >0</text></svg><div class="abs" id="ml"><div class="mt"></div><svg class="abs" style="left:8px;top:6px" width="16" height="16" viewBox="0 0 16 16"><rect width="16" height="16" fill="#000080"/><path d="M0 8L4 5L8 7L12 4L16 3" stroke="#ff0000" stroke-width="2.2" fill="none"/><path d="M0 12L4 9L8 10L12 7L16 6" stroke="#00ee00" stroke-width="2.2" fill="none"/></svg><div class="abs" style="left:30px;top:9px;font-size:12px;color:#9a9a9a;white-space:nowrap"><span style="letter-spacing:.55px">My Language(</span>麦语言)趋势跟踪模型编写平台 - 加减仓</div><div class="abs" style="left:7px;top:34px;font-size:12px;color:#6a6a6a;white-space:nowrap">文件</div><div class="abs" style="left:45px;top:34px;font-size:12px;color:#6a6a6a;white-space:nowrap">编辑</div><div class="abs" style="left:83px;top:34px;font-size:12px;color:#6a6a6a;white-space:nowrap">插入</div><div class="abs" style="left:121px;top:34px;font-size:12px;color:#6a6a6a;white-space:nowrap">检测</div><div class="abs" style="left:159px;top:34px;font-size:12px;color:#6a6a6a;white-space:nowrap">更新</div><div class="abs" style="left:197px;top:34px;font-size:12px;color:#6a6a6a;white-space:nowrap">设置</div><div class="abs" style="left:235px;top:34px;font-size:12px;color:#6a6a6a;white-space:nowrap">帮助</div><svg class="abs" style="left:0;top:48px" width="420" height="28" viewBox="0 48 420 28"><g transform="translate(22,65)" stroke="#1a1a1a" stroke-width="1.1" fill="none" stroke-linecap="round" stroke-linejoin="round"><path d="M-6 -8.5H2L6 -4.5V8.5H-6ZM2 -8.5V-4.5H6M-3 2H3M0 -1V5"/></g><g transform="translate(52.5,65)" stroke="#1a1a1a" stroke-width="1.1" fill="none" stroke-linecap="round" stroke-linejoin="round"><path d="M-6.5 -8.5H4L6.5 -6V8.5H-6.5ZM-3 -8.5V-2H3.5V-8.5M1 -6.5V-4"/></g><g transform="translate(82,65)" stroke="#1a1a1a" stroke-width="1.1" fill="none" stroke-linecap="round" stroke-linejoin="round"><path d="M-4.5 -3V-8H4.5V-3M-4.5 4H-7.5V-3H7.5V4H4.5M-4.5 1H4.5V8H-4.5ZM-2.5 3.5H2.5M-2.5 5.5H2.5"/></g><g transform="translate(115,65)" stroke="#1a1a1a" stroke-width="1.1" fill="none" stroke-linecap="round" stroke-linejoin="round"><path d="M-4.5 -6L3 3.5M4.5 -6L-3 3.5"/><circle cx="-4" cy="5" r="2"/><circle cx="4" cy="5" r="2"/></g><g transform="translate(145,65)" stroke="#1a1a1a" stroke-width="1.1" fill="none" stroke-linecap="round" stroke-linejoin="round"><path d="M-6 4.5V-7.5H3M-3 -4.5H6V8H-3ZM-0.5 -1H3.5M-0.5 1.5H3.5M-0.5 4H3.5" stroke-width="1.2"/></g><g transform="translate(175.5,65)" stroke="#1a1a1a" stroke-width="1.1" fill="none" stroke-linecap="round" stroke-linejoin="round"><path d="M-3 -6.5H-6.5V6H-1M3 -6.5H5V-3M-3 -8H3V-5H-3ZM-1 -2.5H7.5V8.5H-1ZM1.5 0.5H5M1.5 3H5M1.5 5.5H5" stroke-width="1.2"/></g><g transform="translate(205.5,65)" stroke="#1a1a1a" stroke-width="1.1" fill="none" stroke-linecap="round" stroke-linejoin="round"><path d="M-3 -7.5L-7 -3.5L-3 0.5M-7 -3.5H2A4.5 4.5 0 0 1 2 6H-3"/></g><g transform="translate(234.5,65)" stroke="#1a1a1a" stroke-width="1.1" fill="none" stroke-linecap="round" stroke-linejoin="round"><path d="M3 -7.5L7 -3.5L3 0.5M7 -3.5H-2A4.5 4.5 0 0 0 -2 6H3"/></g><g transform="translate(264.5,65)" stroke="#1a1a1a" stroke-width="1.1" fill="none" stroke-linecap="round" stroke-linejoin="round"><circle cx="-0.5" cy="-1" r="6"/><path d="M4 3.5L7 7"/></g><g transform="translate(328.5,65)" stroke="#1a1a1a" stroke-width="1.1" fill="none" stroke-linecap="round" stroke-linejoin="round"><path d="M-6 -8.5H2L6 -4.5V8.5H-6ZM-2.5 4V-1L2.5 4V-1" stroke-width="1.2"/></g><g transform="translate(358,65)" stroke="#1a1a1a" stroke-width="1.1" fill="none" stroke-linecap="round" stroke-linejoin="round"><path d="M-8 7L-3 -1L0 3L7 -7M-3.5 -8V7M2.5 -8V7" stroke-width="1"/><rect x="-4.5" y="-3" width="2" height="4" fill="#1a1a1a" stroke-width=".6"/><rect x="1.5" y="0" width="2" height="4" fill="#1a1a1a" stroke-width=".6"/></g><g transform="translate(388.5,65)" stroke="#1a1a1a" stroke-width="1.1" fill="none" stroke-linecap="round" stroke-linejoin="round"><path d="M-6 -8.5H2L6 -4.5V8.5H-6ZM2 -8.5V-4.5H6M-3 -2H1M-3 1H3M-3 4H3" stroke-width="1.2"/></g><path d="M98.5 56V74M281.5 56V74" stroke="#b4b4b4" shape-rendering="crispEdges"/><path d="M3 52V74" stroke="#404040" stroke-width="2" stroke-dasharray="1 2" shape-rendering="crispEdges"/><path d="M2 50.5H7" stroke="#888" shape-rendering="crispEdges"/><text x="298" y="73" font-size="10.5" font-family="Liberation Sans, sans-serif" fill="#1a1a1a" text-anchor="middle">abc</text><path d="M297 60L300 63.5L306 57" stroke="#1a1a1a" stroke-width="1.1" fill="none"/></svg><div class="abs" style="left:0;top:76px;width:170px;height:528px;background:#fff;border:1px solid #828790;border-left-color:#a0a0a0"></div><svg class="abs" style="left:0;top:76px" width="170" height="330" viewBox="0 76 170 330" shape-rendering="crispEdges"><path d="M15.5 90V393M34.5 94V239" stroke="#808080" stroke-dasharray="1 1"/><path d="M20 85.5H25" stroke="#808080" stroke-dasharray="1 1"/><rect x="11.5" y="81.5" width="8" height="8" fill="#fff" stroke="#919191"/><path d="M13 85.5H18" stroke="#2c4ea0"/><path d="M35 99.5H43" stroke="#808080" stroke-dasharray="1 1"/><path d="M35 113.5H43" stroke="#808080" stroke-dasharray="1 1"/><path d="M35 127.5H43" stroke="#808080" stroke-dasharray="1 1"/><path d="M35 141.5H43" stroke="#808080" stroke-dasharray="1 1"/><path d="M35 155.5H43" stroke="#808080" stroke-dasharray="1 1"/><path d="M35 169.5H43" stroke="#808080" stroke-dasharray="1 1"/><path d="M35 183.5H43" stroke="#808080" stroke-dasharray="1 1"/><path d="M35 197.5H43" stroke="#808080" stroke-dasharray="1 1"/><path d="M35 211.5H43" stroke="#808080" stroke-dasharray="1 1"/><path d="M35 225.5H43" stroke="#808080" stroke-dasharray="1 1"/><path d="M35 239.5H43" stroke="#808080" stroke-dasharray="1 1"/><path d="M20 253.5H25" stroke="#808080" stroke-dasharray="1 1"/><rect x="11.5" y="249.5" width="8" height="8" fill="#fff" stroke="#919191"/><path d="M13 253.5H18" stroke="#2c4ea0"/><path d="M15.5 251V256" stroke="#2c4ea0"/><path d="M20 267.5H25" stroke="#808080" stroke-dasharray="1 1"/><rect x="11.5" y="263.5" width="8" height="8" fill="#fff" stroke="#919191"/><path d="M13 267.5H18" stroke="#2c4ea0"/><path d="M15.5 265V270" stroke="#2c4ea0"/><path d="M20 281.5H25" stroke="#808080" stroke-dasharray="1 1"/><rect x="11.5" y="277.5" width="8" height="8" fill="#fff" stroke="#919191"/><path d="M13 281.5H18" stroke="#2c4ea0"/><path d="M15.5 279V284" stroke="#2c4ea0"/><path d="M20 295.5H25" stroke="#808080" stroke-dasharray="1 1"/><rect x="11.5" y="291.5" width="8" height="8" fill="#fff" stroke="#919191"/><path d="M13 295.5H18" stroke="#2c4ea0"/><path d="M15.5 293V298" stroke="#2c4ea0"/><path d="M20 309.5H25" stroke="#808080" stroke-dasharray="1 1"/><rect x="11.5" y="305.5" width="8" height="8" fill="#fff" stroke="#919191"/><path d="M13 309.5H18" stroke="#2c4ea0"/><path d="M15.5 307V312" stroke="#2c4ea0"/><path d="M20 323.5H25" stroke="#808080" stroke-dasharray="1 1"/><rect x="11.5" y="319.5" width="8" height="8" fill="#fff" stroke="#919191"/><path d="M13 323.5H18" stroke="#2c4ea0"/><path d="M15.5 321V326" stroke="#2c4ea0"/><path d="M20 337.5H25" stroke="#808080" stroke-dasharray="1 1"/><rect x="11.5" y="333.5" width="8" height="8" fill="#fff" stroke="#919191"/><path d="M13 337.5H18" stroke="#2c4ea0"/><path d="M15.5 335V340" stroke="#2c4ea0"/><path d="M20 351.5H25" stroke="#808080" stroke-dasharray="1 1"/><rect x="11.5" y="347.5" width="8" height="8" fill="#fff" stroke="#919191"/><path d="M13 351.5H18" stroke="#2c4ea0"/><path d="M15.5 349V354" stroke="#2c4ea0"/><path d="M20 365.5H25" stroke="#808080" stroke-dasharray="1 1"/><rect x="11.5" y="361.5" width="8" height="8" fill="#fff" stroke="#919191"/><path d="M13 365.5H18" stroke="#2c4ea0"/><path d="M15.5 363V368" stroke="#2c4ea0"/><path d="M20 379.5H25" stroke="#808080" stroke-dasharray="1 1"/><rect x="11.5" y="375.5" width="8" height="8" fill="#fff" stroke="#919191"/><path d="M13 379.5H18" stroke="#2c4ea0"/><path d="M15.5 377V382" stroke="#2c4ea0"/><path d="M20 393.5H25" stroke="#808080" stroke-dasharray="1 1"/><rect x="11.5" y="389.5" width="8" height="8" fill="#fff" stroke="#919191"/><path d="M13 393.5H18" stroke="#2c4ea0"/><path d="M15.5 391V396" stroke="#2c4ea0"/></svg><div class="mtr" style="left:26px;top:79px"><span class="l">K</span>线形态</div><div class="mtr" style="left:45px;top:93px"><span class="l">K</span>线<span class="l"> K</span>线</div><div class="mtr" style="left:45px;top:107px"><span class="l">BAR </span>竹线</div><div class="mtr" style="left:45px;top:121px"><span class="l">TOWER </span>宝塔线</div><div class="mtr" style="left:45px;top:135px"><span class="l">CLOSE </span>收盘价线</div><div class="mtr" style="left:45px;top:149px"><span class="l">WK </span>文华<span class="l">k</span>线图</div><div class="mtr" style="left:45px;top:163px">收盘过滤</div><div class="mtr" style="left:45px;top:177px"><span class="l">JIANDAN</span></div><div class="mtr" style="left:45px;top:191px"><span class="l">FENB</span></div><div class="mtr" style="left:45px;top:205px"><span class="l">CC</span></div><div class="mtr" style="left:45px;top:219px"><span class="l">IDLE</span></div><div class="mtr" style="left:44px;top:234px;background:#0a32c8;color:#fff;height:13px;line-height:13px;padding:0 0px">加减仓</div><div class="mtr" style="left:26px;top:247px">趋势分析</div><div class="mtr" style="left:26px;top:261px">摆动分析</div><div class="mtr" style="left:26px;top:275px">量仓分析</div><div class="mtr" style="left:26px;top:289px">形态选股</div><div class="mtr" style="left:26px;top:303px">指标选股</div><div class="mtr" style="left:26px;top:317px">走势选股</div><div class="mtr" style="left:26px;top:331px">其他</div><div class="mtr" style="left:26px;top:345px">趋势模型编写示范</div><div class="mtr" style="left:26px;top:359px">公式条件单编写示范</div><div class="mtr" style="left:26px;top:373px">模型开发案例</div><div class="mtr" style="left:26px;top:387px">自编</div><svg class="abs" style="left:172px;top:340px" width="14" height="14" viewBox="0 0 14 14"><path d="M9 2.5L4.5 7L9 11.5" stroke="#000" fill="none" stroke-width="1.1"/></svg><div class="abs" style="left:189px;top:99px;width:611px;height:505px;border-top:1px solid #d9d9d9;border-left:1px solid #d9d9d9"></div><div class="abs" style="left:239px;top:79px;width:57px;height:21px;border:1px solid #d9d9d9;background:#f0f0f0"></div><div class="abs" style="left:189px;top:76px;width:51px;height:24px;border:1px solid #d9d9d9;border-bottom:none;background:#fff"></div><div class="abs" style="left:196px;top:83px;font-size:12px;white-space:nowrap">公式</div><div class="abs" style="left:243px;top:85px;font-size:12px;white-space:nowrap">公式说明</div><div class="abs" style="left:189px;top:100px;width:531px;height:405px;background:#fff"></div><div class="abs" style="left:189px;top:100px;width:3px;height:504px;background:#fff"></div><div class="abs" style="left:192px;top:104px;width:36px;height:401px;background:#c0c0c0"></div><div class="ln" style="top:106px">1</div><div class="code" style="top:106px"><b>VARIABLE</b>:SS:1;</div><div class="ln" style="top:126px">2</div><div class="code" style="top:126px"><b>IF</b> <b>TRADE_REF</b>(1)=1 <b>THEN</b></div><div class="ln" style="top:146px">3</div><div class="code" style="top:146px"><b>BEGIN</b></div><div class="ln" style="top:166px">4</div><div class="code" style="top:166px"> SS := <b>REF</b>(SS, <b>MIN</b>(<b>BARSSP</b>, <b>BARSBP</b>) + 1) + 1;</div><div class="ln" style="top:186px">5</div><div class="code" style="top:186px"><b>END</b></div><div class="ln" style="top:206px">6</div><div class="code" style="top:206px"><b>IF</b> <b>TRADE_REF</b>(1)=0 <b>THEN</b></div><div class="ln" style="top:226px">7</div><div class="code" style="top:226px"><b>BEGIN</b></div><div class="ln" style="top:246px">8</div><div class="code" style="top:246px"> SS := 1;</div><div class="ln" style="top:266px">9</div><div class="code" style="top:266px"><b>END</b></div><div class="ln" style="top:286px">10</div><div class="code" style="top:286px">RSV:=(<b>CLOSE</b>-<b>LLV</b>(<b>LOW</b>,9))/(<b>HHV</b>(<b>HIGH</b>,9)-<b>LLV</b>(<b>LOW</b>,9))*100;</div><div class="ln" style="top:306px">11</div><div class="code" style="top:306px">MA1:=<b>MA</b>(<b>CLOSE</b>,20);</div><div class="ln" style="top:326px">12</div><div class="code" style="top:326px">K:<b>SMA</b>(RSV,3,1);</div><div class="ln" style="top:346px">13</div><div class="code" style="top:346px">D:<b>SMA</b>(K,3,1);</div><div class="ln" style="top:366px">14</div><div class="code" style="top:366px"><b>CROSSUP</b>(K,D)&amp;&amp;(<b>C</b>&gt;MA1) &amp;&amp; <b>BKVOL</b> = 0,<b>BK</b>(SS);</div><div class="ln" style="top:386px">15</div><div class="code" style="top:386px"><b>CROSSDOWN</b>(K,D)&amp;&amp;(<b>C</b>&lt;MA1) &amp;&amp; <b>SKVOL</b> = 0,<b>SK</b>(SS);</div><div class="ln" style="top:406px">16</div><div class="code" style="top:406px"><b>CROSSUP</b>(K,D)&amp;&amp;(<b>C</b>&lt;MA1),<b>BP</b>(<b>SKVOL</b>);</div><div class="ln" style="top:426px">17</div><div class="code" style="top:426px"><b>CROSSDOWN</b>(K,D)&amp;&amp;(<b>C</b>&gt;MA1),<b>SP</b>(<b>BKVOL</b>);</div><div class="abs" style="left:192px;top:507px;width:518px;height:5px;background:#d6dfdf;border-bottom:1px solid #9a9a9a;border-right:1px solid #9a9a9a"></div><div class="abs" style="left:194px;top:520px;width:528px;height:81px;border:1px solid #828790;background:#f0f0f0"></div><div class="abs" style="left:197px;top:524px;font-size:12px;line-height:12px;white-space:nowrap">请注意！当前策略的一些函数带回溯算法<br>因为这类函数的特点，策略的效果会因为<span class="l">k</span>线数据的起始时间不同，而有一些差异！</div><div class="abs" style="left:704px;top:521px;width:17px;height:79px;background:#f0f0f0"></div><svg class="abs" style="left:704px;top:521px" width="17" height="79" viewBox="0 0 17 79"><path d="M5 11L8.5 7.5L12 11M5 67L8.5 70.5L12 67" stroke="#a0a0a0" fill="none" stroke-width="1.2"/></svg><svg class="abs" style="left:723px;top:327px" width="14" height="14" viewBox="0 0 14 14"><path d="M5 2.5L9.5 7L5 11.5" stroke="#000" fill="none" stroke-width="1.1"/></svg><div class="abs" style="left:740px;top:109px;width:60px;height:20px;background:#6e6e6e;color:#f0f0f0;font-size:12px;line-height:20px;padding-left:6px;white-space:nowrap">基本信息</div><div class="abs" style="left:740px;top:138px;white-space:nowrap">名称<span class="l">:</span></div><div class="abs" style="left:782px;top:138px;white-space:nowrap">加减仓</div><div class="abs" style="left:740px;top:161px;white-space:nowrap">描述<span class="l">:</span></div><div class="abs" style="left:782px;top:157px;width:30px;height:18px;background:#fff;border:1px solid #7a7a7a"></div><div class="abs" style="left:740px;top:187px;white-space:nowrap">属性<span class="l">:</span></div><div class="abs" style="left:782px;top:184px;width:30px;height:20px;background:#e1e1e1;border:1px solid #adadad;white-space:nowrap;line-height:18px;padding-left:3px"><span class="l">K</span>线</div><div class="abs" style="left:740px;top:236px;width:60px;height:20px;background:#6e6e6e;color:#f0f0f0;font-size:12px;line-height:20px;padding-left:6px;white-space:nowrap">参数列表</div><div class="abs" style="left:740px;top:266px;width:60px;height:149px;background:#fff;border-left:1px solid #d0d0d0;border-top:1px solid #d0d0d0"></div><div class="abs" style="left:741px;top:267px;width:34px;height:148px;background:#f0f0f0"></div><div class="abs" style="left:741px;top:267px;width:59px;height:22px;background:#f0f0f0"></div><div class="abs" style="left:775px;top:267px;width:1px;height:148px;background:#d0d0d0"></div><div class="abs" style="left:741px;top:289px;width:59px;height:1px;background:#d0d0d0"></div><div class="abs" style="left:741px;top:310px;width:59px;height:1px;background:#d0d0d0"></div><div class="abs" style="left:741px;top:331px;width:59px;height:1px;background:#d0d0d0"></div><div class="abs" style="left:741px;top:352px;width:59px;height:1px;background:#d0d0d0"></div><div class="abs" style="left:741px;top:373px;width:59px;height:1px;background:#d0d0d0"></div><div class="abs" style="left:741px;top:394px;width:59px;height:1px;background:#d0d0d0"></div><div class="abs" style="left:741px;top:415px;width:59px;height:1px;background:#d0d0d0"></div><div class="abs" style="left:746px;top:271px;white-space:nowrap">参数</div><div class="abs" style="left:781px;top:271px;white-space:nowrap">名称</div><div class="abs l" style="left:755px;top:294px">1</div><div class="abs l" style="left:755px;top:315px">2</div><div class="abs l" style="left:755px;top:336px">3</div><div class="abs l" style="left:755px;top:357px">4</div><div class="abs l" style="left:755px;top:378px">5</div><div class="abs l" style="left:755px;top:399px">6</div><div class="abs" style="left:0;top:604px;width:800px;height:1px;background:#fff"></div></div><div class="abs" id="dlg"><div class="tt"></div><svg class="abs" style="left:3px;top:4px" width="16" height="16" viewBox="0 0 16 16"><rect width="16" height="16" fill="#000080"/><path d="M0 8L4 5L8 7L12 4L16 3" stroke="#ff0000" stroke-width="2.2" fill="none"/><path d="M0 12L4 9L8 10L12 7L16 6" stroke="#00ee00" stroke-width="2.2" fill="none"/></svg><div class="lb" style="left:24px;top:6px;left:25px">重设回测参数</div><svg class="abs" style="left:323px;top:6px" width="13" height="13" viewBox="0 0 13 13"><path d="M1.5 1.5L11.5 11.5M11.5 1.5L1.5 11.5" stroke="#000" stroke-width="1.1"/></svg><div class="abs" style="left:21px;top:45px;width:299px;height:232px;border:1px solid #dcdcdc"></div><div class="lb" style="left:36px;top:63px;">合约</div><div class="inp" style="left:105px;top:58px;width:112px;height:18px;background:#f0f0f0;border-color:#cfcfcf;color:#8a8a8a"><span style="position:absolute;left:3px;top:2px;font-size:12px">苹果1901</span></div><div class="lb" style="left:36px;top:91px;">资金分配量</div><div class="inp" style="left:105px;top:87px;width:112px;height:19px;border-color:#0078d7"><span style="position:absolute;left:2px;top:3px">500000</span><span style="position:absolute;left:38px;top:2px;width:1px;height:13px;background:#000"></span></div><div class="abs" style="left:35px;top:111px;width:275px;height:2px;background:#a0a0a0"></div><div class="lb" style="left:36px;top:131px;">单位</div><div class="inp" style="left:93px;top:126px;width:51px;height:20px;background:#f0f0f0;color:#8a8a8a;border-color:#bcbcbc"><span style="position:absolute;left:3px;top:3px">10</span></div><svg class="abs" style="left:127px;top:127px" width="16" height="18" viewBox="0 0 16 18"><rect x="0" y="0" width="16" height="18" fill="#f0f0f0"/><rect x="0.5" y="0.5" width="15" height="8.5" fill="#ececec" stroke="#cfcfcf"/><rect x="0.5" y="9.5" width="15" height="8" fill="#ececec" stroke="#cfcfcf"/><path d="M5 6.5L8 3L11 6.5Z" fill="#8a8a8a"/><path d="M5 11.5L8 15L11 11.5Z" fill="#8a8a8a"/></svg><div class="lb" style="left:154px;top:131px;">吨<span class="l">/</span>手</div><div class="lb" style="left:36px;top:155px;">保证金</div><div class="inp" style="left:93px;top:150px;width:51px;height:20px;background:#fff;color:#000;border-color:#7a7a7a"><span style="position:absolute;left:3px;top:3px">8</span></div><svg class="abs" style="left:127px;top:151px" width="16" height="18" viewBox="0 0 16 18"><rect x="0" y="0" width="16" height="18" fill="#f0f0f0"/><rect x="0.5" y="0.5" width="15" height="8.5" fill="#ececec" stroke="#cfcfcf"/><rect x="0.5" y="9.5" width="15" height="8" fill="#ececec" stroke="#cfcfcf"/><path d="M5 6.5L8 3L11 6.5Z" fill="#000"/><path d="M5 11.5L8 15L11 11.5Z" fill="#000"/></svg><div class="lb" style="left:152px;top:155px;"><span class="l">%</span></div><div class="lb" style="left:167px;top:155px;">手续费</div><div class="inp" style="left:210px;top:150px;width:51px;height:20px;background:#fff;color:#000;border-color:#7a7a7a"><span style="position:absolute;left:3px;top:3px">0</span></div><svg class="abs" style="left:244px;top:151px" width="16" height="18" viewBox="0 0 16 18"><rect x="0" y="0" width="16" height="18" fill="#f0f0f0"/><rect x="0.5" y="0.5" width="15" height="8.5" fill="#ececec" stroke="#cfcfcf"/><rect x="0.5" y="9.5" width="15" height="8" fill="#ececec" stroke="#cfcfcf"/><path d="M5 6.5L8 3L11 6.5Z" fill="#000"/><path d="M5 11.5L8 15L11 11.5Z" fill="#000"/></svg><div class="lb" style="left:275px;top:155px;">元<span class="l">/</span>手</div><div class="lb" style="left:36px;top:179px;">滑点</div><div class="inp" style="left:93px;top:174px;width:51px;height:20px;background:#fff;color:#000;border-color:#7a7a7a"><span style="position:absolute;left:3px;top:3px">0</span></div><svg class="abs" style="left:127px;top:175px" width="16" height="18" viewBox="0 0 16 18"><rect x="0" y="0" width="16" height="18" fill="#f0f0f0"/><rect x="0.5" y="0.5" width="15" height="8.5" fill="#ececec" stroke="#cfcfcf"/><rect x="0.5" y="9.5" width="15" height="8" fill="#ececec" stroke="#cfcfcf"/><path d="M5 6.5L8 3L11 6.5Z" fill="#000"/><path d="M5 11.5L8 15L11 11.5Z" fill="#000"/></svg><div class="abs" style="left:35px;top:207px;width:275px;height:2px;background:#a0a0a0"></div><div class="lb" style="left:36px;top:237px;">开仓手数</div><div class="inp" style="left:92px;top:232px;width:74px;height:20px"><span style="position:absolute;left:3px;top:3px" class="l">1</span></div><div class="lb" style="left:174px;top:236px;"><span class="l">(AutoFilter</span>模型有效<span class="l">)</span></div><div class="abs" style="left:150px;top:289px;width:73px;height:19px;border:2px solid #0078d7;background:#e1e1e1;text-align:center;line-height:14px;font-size:12px">确定</div><div class="abs" style="left:246px;top:289px;width:73px;height:19px;border:1px solid #adadad;background:#e1e1e1;text-align:center;line-height:16px;font-size:12px">取消</div></div><svg class="abs" style="left:0;top:0;pointer-events:none" width="520" height="220" viewBox="0 0 520 220"><ellipse cx="224.5" cy="39.5" rx="11.5" ry="17.5" fill="none" stroke="#e8141c" stroke-width="2.6"/><path d="M236 64L296 186" stroke="#e8242c" stroke-width="2.6"/><path d="M299 194L284 180L296 182L298 170Z" fill="#e8242c"/></svg></div></body></html>
